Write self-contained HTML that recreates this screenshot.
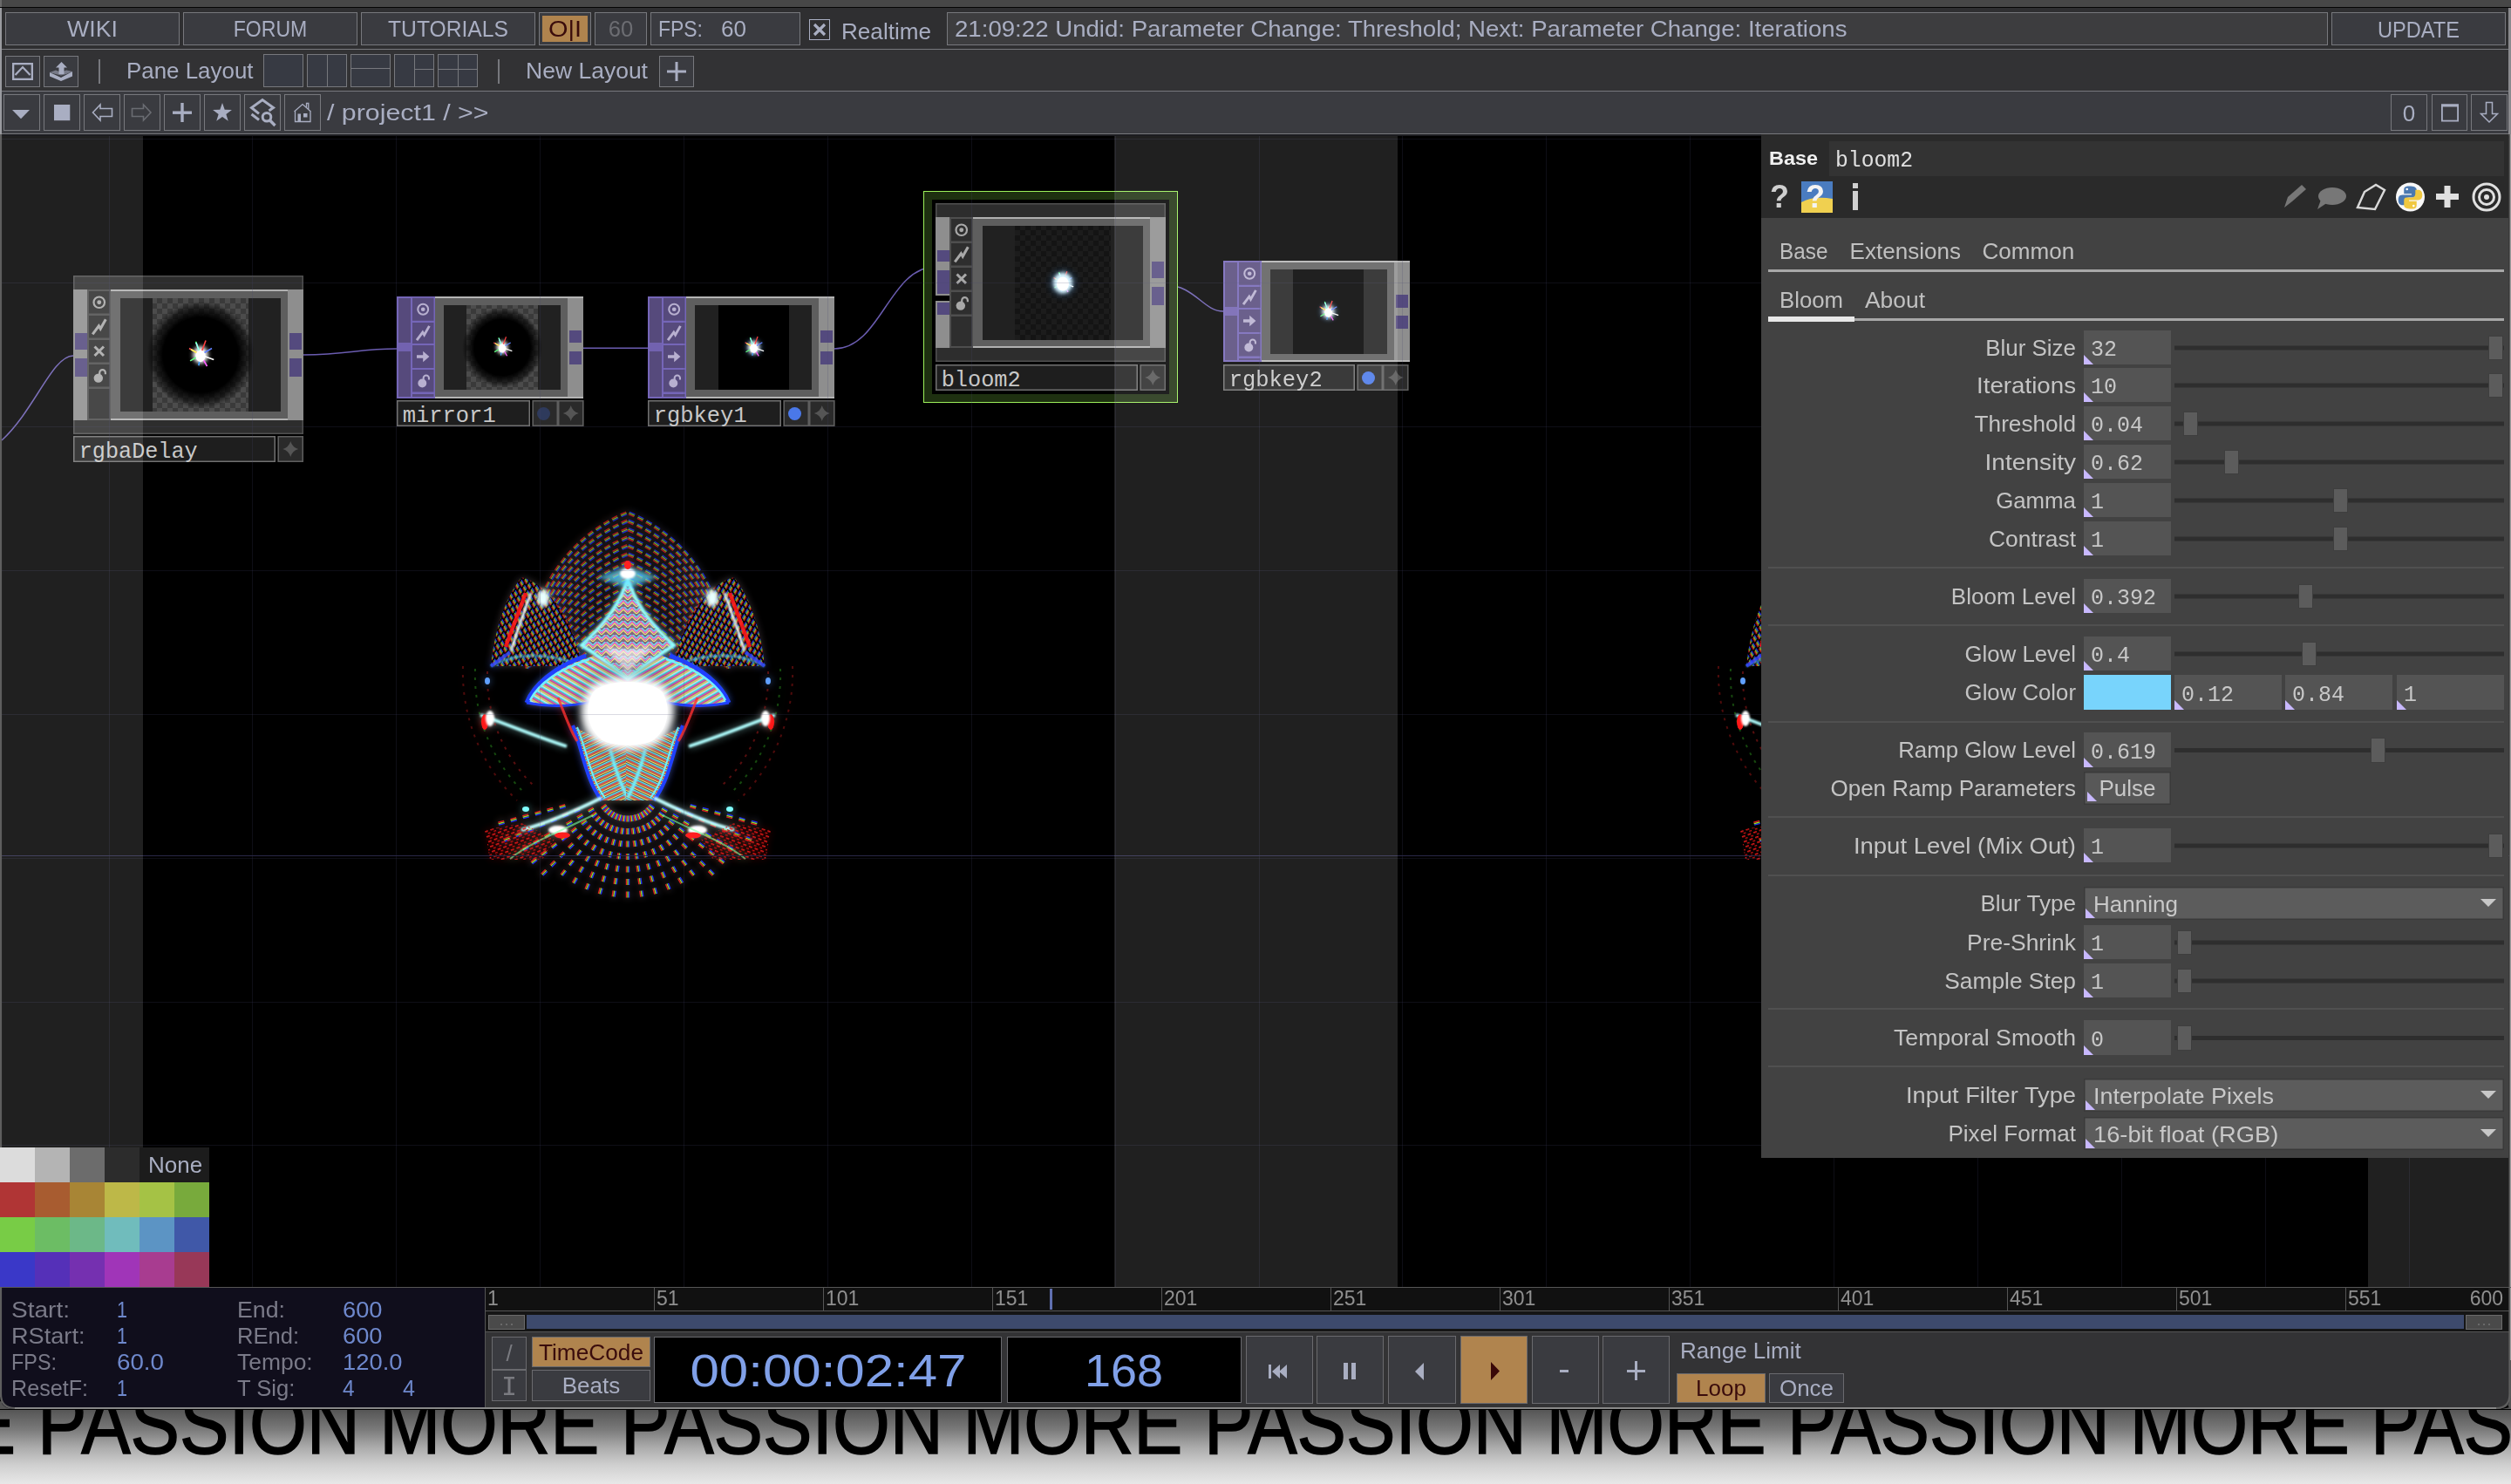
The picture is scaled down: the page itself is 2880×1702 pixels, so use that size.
<!DOCTYPE html>
<html><head><meta charset="utf-8"><style>
*{margin:0;padding:0}
html,body{width:2880px;height:1702px;overflow:hidden;background:#fff}
svg{position:absolute;left:0;top:0;display:block}
</style></head><body>
<svg width="2880" height="1702" viewBox="0 0 2880 1702">
<defs><g id="dsh"><rect x="-3.5" y="-2.2" width="7" height="1.4" fill="#2030ff"/><rect x="-3.5" y="-0.7" width="7" height="1.4" fill="#90e030"/><rect x="-3.5" y="0.8" width="7" height="1.4" fill="#e02020"/></g>
<filter id="b1" x="-50%" y="-50%" width="200%" height="200%"><feGaussianBlur stdDeviation="1"/></filter>
<pattern id="dense" width="7" height="6" patternUnits="userSpaceOnUse" patternTransform="rotate(60)">
<rect width="7" height="6" fill="#000"/><rect x="0" y="0" width="5" height="1.4" fill="#2030ff"/><rect x="1" y="1.5" width="5" height="1.4" fill="#90e030"/><rect x="2" y="3" width="5" height="1.4" fill="#e02020"/></pattern>
<pattern id="reddots" width="7" height="6" patternUnits="userSpaceOnUse" patternTransform="rotate(-20)">
<rect x="0" y="0" width="4" height="1.6" fill="#e01818"/><rect x="3" y="3" width="3" height="1.4" fill="#c01010"/></pattern>
<pattern id="chev" width="10" height="8" patternUnits="userSpaceOnUse">
<rect width="10" height="8" fill="#806880"/><path d="M0 6 L5 1 L10 6" fill="none" stroke="#ff60d0" stroke-width="1.4"/><path d="M0 8 L5 3 L10 8" fill="none" stroke="#f0f070" stroke-width="1.2"/><path d="M0 4 L5 -1 L10 4" fill="none" stroke="#60f0ff" stroke-width="1.2"/></pattern>

<pattern id="chk" width="12" height="12" patternUnits="userSpaceOnUse">
<rect width="12" height="12" fill="#3a3a3a"/><rect width="6" height="6" fill="#4c4c4c"/><rect x="6" y="6" width="6" height="6" fill="#4c4c4c"/></pattern>
<pattern id="chkd" width="12" height="12" patternUnits="userSpaceOnUse">
<rect width="12" height="12" fill="#141414"/><rect width="6" height="6" fill="#1c1c1c"/><rect x="6" y="6" width="6" height="6" fill="#1c1c1c"/></pattern>
<radialGradient id="vig"><stop offset="0" stop-color="#000"/><stop offset="0.7" stop-color="#000"/><stop offset="0.88" stop-color="#000" stop-opacity="0.55"/><stop offset="1" stop-color="#000" stop-opacity="0"/></radialGradient>
<radialGradient id="glow"><stop offset="0" stop-color="#c0e8ff" stop-opacity="0.9"/><stop offset="0.4" stop-color="#4080c0" stop-opacity="0.35"/><stop offset="1" stop-color="#000" stop-opacity="0"/></radialGradient>
<radialGradient id="core"><stop offset="0" stop-color="#fff"/><stop offset="0.7" stop-color="#fff"/><stop offset="1" stop-color="#fff" stop-opacity="0"/></radialGradient>
<filter id="b2" x="-50%" y="-50%" width="200%" height="200%"><feGaussianBlur stdDeviation="2"/></filter>
<filter id="b4" x="-50%" y="-50%" width="200%" height="200%"><feGaussianBlur stdDeviation="4"/></filter>
<filter id="b8" x="-50%" y="-50%" width="200%" height="200%"><feGaussianBlur stdDeviation="8"/></filter>
<clipPath id="clipR"><rect x="1930" y="156" width="90" height="1320"/></clipPath>
<pattern id="dots" width="10" height="10" patternUnits="userSpaceOnUse">
<rect x="1" y="2" width="3" height="1.5" fill="#e03030"/><rect x="6" y="6" width="3" height="1.5" fill="#90e040"/><rect x="4" y="8.5" width="2.5" height="1.2" fill="#4050ff"/></pattern>
<pattern id="dots2" width="8" height="8" patternUnits="userSpaceOnUse">
<rect x="1" y="1" width="3" height="1.6" fill="#ff3030"/><rect x="5" y="4.5" width="3" height="1.6" fill="#a0ff50"/><rect x="2" y="6" width="2.5" height="1.4" fill="#5060ff"/></pattern>
<pattern id="stripes" width="7" height="7" patternUnits="userSpaceOnUse" patternTransform="rotate(30)">
<rect width="7" height="7" fill="#505058"/><rect y="0" width="7" height="1.6" fill="#50f0ff"/><rect y="2.2" width="7" height="1.4" fill="#ff50c0"/><rect y="4.2" width="7" height="1.4" fill="#f0f060"/><rect y="5.8" width="7" height="1" fill="#ffffff"/></pattern>
<pattern id="stripes2" width="6" height="6" patternUnits="userSpaceOnUse" patternTransform="rotate(-25)">
<rect width="6" height="6" fill="#504848"/><rect y="0" width="6" height="1.5" fill="#60e8ff"/><rect y="2" width="6" height="1.3" fill="#ff4040"/><rect y="3.8" width="6" height="1.3" fill="#f8e060"/></pattern>
<g id="fig"><g opacity="0.75"><use href="#dsh" transform="translate(715.4 589.9) rotate(156)"/><use href="#dsh" transform="translate(705.4 594.6) rotate(153)"/><use href="#dsh" transform="translate(695.8 599.9) rotate(149)"/><use href="#dsh" transform="translate(686.5 605.8) rotate(146)"/><use href="#dsh" transform="translate(677.6 612.2) rotate(142)"/><use href="#dsh" transform="translate(669.0 619.2) rotate(139)"/><use href="#dsh" transform="translate(661.0 626.6) rotate(135)"/><use href="#dsh" transform="translate(653.4 634.6) rotate(132)"/><use href="#dsh" transform="translate(646.3 643.0) rotate(128)"/><use href="#dsh" transform="translate(639.7 651.8) rotate(125)"/><use href="#dsh" transform="translate(633.7 661.0) rotate(121)"/><use href="#dsh" transform="translate(628.3 670.6) rotate(118)"/><use href="#dsh" transform="translate(623.4 680.5) rotate(114)"/><use href="#dsh" transform="translate(619.2 690.6) rotate(111)"/><use href="#dsh" transform="translate(615.6 701.0) rotate(107)"/><use href="#dsh" transform="translate(612.7 711.6) rotate(104)"/><use href="#dsh" transform="translate(610.4 722.4) rotate(100)"/><use href="#dsh" transform="translate(608.5 733.2) rotate(100)"/><use href="#dsh" transform="translate(606.6 744.0) rotate(100)"/><use href="#dsh" transform="translate(604.7 754.9) rotate(100)"/><use href="#dsh" transform="translate(724.6 589.9) rotate(24)"/><use href="#dsh" transform="translate(734.6 594.6) rotate(27)"/><use href="#dsh" transform="translate(744.2 599.9) rotate(31)"/><use href="#dsh" transform="translate(753.5 605.8) rotate(34)"/><use href="#dsh" transform="translate(762.4 612.2) rotate(38)"/><use href="#dsh" transform="translate(771.0 619.2) rotate(41)"/><use href="#dsh" transform="translate(779.0 626.6) rotate(45)"/><use href="#dsh" transform="translate(786.6 634.6) rotate(48)"/><use href="#dsh" transform="translate(793.7 643.0) rotate(52)"/><use href="#dsh" transform="translate(800.3 651.8) rotate(55)"/><use href="#dsh" transform="translate(806.3 661.0) rotate(59)"/><use href="#dsh" transform="translate(811.7 670.6) rotate(62)"/><use href="#dsh" transform="translate(816.6 680.5) rotate(66)"/><use href="#dsh" transform="translate(820.8 690.6) rotate(69)"/><use href="#dsh" transform="translate(824.4 701.0) rotate(73)"/><use href="#dsh" transform="translate(827.3 711.6) rotate(76)"/><use href="#dsh" transform="translate(829.6 722.4) rotate(80)"/><use href="#dsh" transform="translate(831.5 733.2) rotate(80)"/><use href="#dsh" transform="translate(833.4 744.0) rotate(80)"/><use href="#dsh" transform="translate(835.3 754.9) rotate(80)"/><use href="#dsh" transform="translate(716.3 599.0) rotate(157)"/><use href="#dsh" transform="translate(706.3 603.7) rotate(153)"/><use href="#dsh" transform="translate(696.7 608.9) rotate(150)"/><use href="#dsh" transform="translate(687.3 614.7) rotate(146)"/><use href="#dsh" transform="translate(678.4 621.1) rotate(143)"/><use href="#dsh" transform="translate(669.8 628.0) rotate(139)"/><use href="#dsh" transform="translate(661.7 635.4) rotate(136)"/><use href="#dsh" transform="translate(654.1 643.3) rotate(132)"/><use href="#dsh" transform="translate(646.9 651.7) rotate(129)"/><use href="#dsh" transform="translate(640.3 660.5) rotate(125)"/><use href="#dsh" transform="translate(634.2 669.7) rotate(122)"/><use href="#dsh" transform="translate(628.8 679.2) rotate(118)"/><use href="#dsh" transform="translate(623.9 689.0) rotate(114)"/><use href="#dsh" transform="translate(619.6 699.2) rotate(111)"/><use href="#dsh" transform="translate(615.9 709.6) rotate(107)"/><use href="#dsh" transform="translate(612.9 720.1) rotate(104)"/><use href="#dsh" transform="translate(610.6 730.9) rotate(100)"/><use href="#dsh" transform="translate(608.7 741.7) rotate(100)"/><use href="#dsh" transform="translate(606.8 752.5) rotate(100)"/><use href="#dsh" transform="translate(604.9 763.4) rotate(100)"/><use href="#dsh" transform="translate(723.7 599.0) rotate(23)"/><use href="#dsh" transform="translate(733.7 603.7) rotate(27)"/><use href="#dsh" transform="translate(743.3 608.9) rotate(30)"/><use href="#dsh" transform="translate(752.7 614.7) rotate(34)"/><use href="#dsh" transform="translate(761.6 621.1) rotate(37)"/><use href="#dsh" transform="translate(770.2 628.0) rotate(41)"/><use href="#dsh" transform="translate(778.3 635.4) rotate(44)"/><use href="#dsh" transform="translate(785.9 643.3) rotate(48)"/><use href="#dsh" transform="translate(793.1 651.7) rotate(51)"/><use href="#dsh" transform="translate(799.7 660.5) rotate(55)"/><use href="#dsh" transform="translate(805.8 669.7) rotate(58)"/><use href="#dsh" transform="translate(811.2 679.2) rotate(62)"/><use href="#dsh" transform="translate(816.1 689.0) rotate(66)"/><use href="#dsh" transform="translate(820.4 699.2) rotate(69)"/><use href="#dsh" transform="translate(824.1 709.6) rotate(73)"/><use href="#dsh" transform="translate(827.1 720.1) rotate(76)"/><use href="#dsh" transform="translate(829.4 730.9) rotate(80)"/><use href="#dsh" transform="translate(831.3 741.7) rotate(80)"/><use href="#dsh" transform="translate(833.2 752.5) rotate(80)"/><use href="#dsh" transform="translate(835.1 763.4) rotate(80)"/><use href="#dsh" transform="translate(716.3 608.5) rotate(157)"/><use href="#dsh" transform="translate(706.3 613.2) rotate(153)"/><use href="#dsh" transform="translate(696.7 618.4) rotate(150)"/><use href="#dsh" transform="translate(687.3 624.2) rotate(146)"/><use href="#dsh" transform="translate(678.4 630.6) rotate(143)"/><use href="#dsh" transform="translate(669.8 637.5) rotate(139)"/><use href="#dsh" transform="translate(661.7 644.9) rotate(136)"/><use href="#dsh" transform="translate(654.1 652.8) rotate(132)"/><use href="#dsh" transform="translate(646.9 661.2) rotate(129)"/><use href="#dsh" transform="translate(640.3 670.0) rotate(125)"/><use href="#dsh" transform="translate(634.2 679.2) rotate(122)"/><use href="#dsh" transform="translate(628.8 688.7) rotate(118)"/><use href="#dsh" transform="translate(623.9 698.5) rotate(114)"/><use href="#dsh" transform="translate(619.6 708.7) rotate(111)"/><use href="#dsh" transform="translate(615.9 719.1) rotate(107)"/><use href="#dsh" transform="translate(612.9 729.6) rotate(104)"/><use href="#dsh" transform="translate(610.6 740.4) rotate(100)"/><use href="#dsh" transform="translate(608.7 751.2) rotate(100)"/><use href="#dsh" transform="translate(606.8 762.0) rotate(100)"/><use href="#dsh" transform="translate(723.7 608.5) rotate(23)"/><use href="#dsh" transform="translate(733.7 613.2) rotate(27)"/><use href="#dsh" transform="translate(743.3 618.4) rotate(30)"/><use href="#dsh" transform="translate(752.7 624.2) rotate(34)"/><use href="#dsh" transform="translate(761.6 630.6) rotate(37)"/><use href="#dsh" transform="translate(770.2 637.5) rotate(41)"/><use href="#dsh" transform="translate(778.3 644.9) rotate(44)"/><use href="#dsh" transform="translate(785.9 652.8) rotate(48)"/><use href="#dsh" transform="translate(793.1 661.2) rotate(51)"/><use href="#dsh" transform="translate(799.7 670.0) rotate(55)"/><use href="#dsh" transform="translate(805.8 679.2) rotate(58)"/><use href="#dsh" transform="translate(811.2 688.7) rotate(62)"/><use href="#dsh" transform="translate(816.1 698.5) rotate(66)"/><use href="#dsh" transform="translate(820.4 708.7) rotate(69)"/><use href="#dsh" transform="translate(824.1 719.1) rotate(73)"/><use href="#dsh" transform="translate(827.1 729.6) rotate(76)"/><use href="#dsh" transform="translate(829.4 740.4) rotate(80)"/><use href="#dsh" transform="translate(831.3 751.2) rotate(80)"/><use href="#dsh" transform="translate(833.2 762.0) rotate(80)"/><use href="#dsh" transform="translate(716.3 618.0) rotate(157)"/><use href="#dsh" transform="translate(706.3 622.7) rotate(153)"/><use href="#dsh" transform="translate(696.7 627.9) rotate(150)"/><use href="#dsh" transform="translate(687.3 633.7) rotate(146)"/><use href="#dsh" transform="translate(678.4 640.1) rotate(143)"/><use href="#dsh" transform="translate(669.8 647.0) rotate(139)"/><use href="#dsh" transform="translate(661.7 654.4) rotate(136)"/><use href="#dsh" transform="translate(654.1 662.3) rotate(132)"/><use href="#dsh" transform="translate(646.9 670.7) rotate(129)"/><use href="#dsh" transform="translate(640.3 679.5) rotate(125)"/><use href="#dsh" transform="translate(634.2 688.7) rotate(122)"/><use href="#dsh" transform="translate(628.8 698.2) rotate(118)"/><use href="#dsh" transform="translate(623.9 708.0) rotate(114)"/><use href="#dsh" transform="translate(619.6 718.2) rotate(111)"/><use href="#dsh" transform="translate(615.9 728.6) rotate(107)"/><use href="#dsh" transform="translate(612.9 739.1) rotate(104)"/><use href="#dsh" transform="translate(610.6 749.9) rotate(100)"/><use href="#dsh" transform="translate(608.7 760.7) rotate(100)"/><use href="#dsh" transform="translate(723.7 618.0) rotate(23)"/><use href="#dsh" transform="translate(733.7 622.7) rotate(27)"/><use href="#dsh" transform="translate(743.3 627.9) rotate(30)"/><use href="#dsh" transform="translate(752.7 633.7) rotate(34)"/><use href="#dsh" transform="translate(761.6 640.1) rotate(37)"/><use href="#dsh" transform="translate(770.2 647.0) rotate(41)"/><use href="#dsh" transform="translate(778.3 654.4) rotate(44)"/><use href="#dsh" transform="translate(785.9 662.3) rotate(48)"/><use href="#dsh" transform="translate(793.1 670.7) rotate(51)"/><use href="#dsh" transform="translate(799.7 679.5) rotate(55)"/><use href="#dsh" transform="translate(805.8 688.7) rotate(58)"/><use href="#dsh" transform="translate(811.2 698.2) rotate(62)"/><use href="#dsh" transform="translate(816.1 708.0) rotate(66)"/><use href="#dsh" transform="translate(820.4 718.2) rotate(69)"/><use href="#dsh" transform="translate(824.1 728.6) rotate(73)"/><use href="#dsh" transform="translate(827.1 739.1) rotate(76)"/><use href="#dsh" transform="translate(829.4 749.9) rotate(80)"/><use href="#dsh" transform="translate(831.3 760.7) rotate(80)"/><use href="#dsh" transform="translate(716.3 627.5) rotate(157)"/><use href="#dsh" transform="translate(706.3 632.2) rotate(153)"/><use href="#dsh" transform="translate(696.7 637.4) rotate(150)"/><use href="#dsh" transform="translate(687.3 643.2) rotate(146)"/><use href="#dsh" transform="translate(678.4 649.6) rotate(143)"/><use href="#dsh" transform="translate(669.8 656.5) rotate(139)"/><use href="#dsh" transform="translate(661.7 663.9) rotate(136)"/><use href="#dsh" transform="translate(654.1 671.8) rotate(132)"/><use href="#dsh" transform="translate(646.9 680.2) rotate(129)"/><use href="#dsh" transform="translate(640.3 689.0) rotate(125)"/><use href="#dsh" transform="translate(634.2 698.2) rotate(122)"/><use href="#dsh" transform="translate(628.8 707.7) rotate(118)"/><use href="#dsh" transform="translate(623.9 717.5) rotate(114)"/><use href="#dsh" transform="translate(619.6 727.7) rotate(111)"/><use href="#dsh" transform="translate(615.9 738.1) rotate(107)"/><use href="#dsh" transform="translate(612.9 748.6) rotate(104)"/><use href="#dsh" transform="translate(610.6 759.4) rotate(100)"/><use href="#dsh" transform="translate(723.7 627.5) rotate(23)"/><use href="#dsh" transform="translate(733.7 632.2) rotate(27)"/><use href="#dsh" transform="translate(743.3 637.4) rotate(30)"/><use href="#dsh" transform="translate(752.7 643.2) rotate(34)"/><use href="#dsh" transform="translate(761.6 649.6) rotate(37)"/><use href="#dsh" transform="translate(770.2 656.5) rotate(41)"/><use href="#dsh" transform="translate(778.3 663.9) rotate(44)"/><use href="#dsh" transform="translate(785.9 671.8) rotate(48)"/><use href="#dsh" transform="translate(793.1 680.2) rotate(51)"/><use href="#dsh" transform="translate(799.7 689.0) rotate(55)"/><use href="#dsh" transform="translate(805.8 698.2) rotate(58)"/><use href="#dsh" transform="translate(811.2 707.7) rotate(62)"/><use href="#dsh" transform="translate(816.1 717.5) rotate(66)"/><use href="#dsh" transform="translate(820.4 727.7) rotate(69)"/><use href="#dsh" transform="translate(824.1 738.1) rotate(73)"/><use href="#dsh" transform="translate(827.1 748.6) rotate(76)"/><use href="#dsh" transform="translate(829.4 759.4) rotate(80)"/><use href="#dsh" transform="translate(716.3 637.0) rotate(157)"/><use href="#dsh" transform="translate(706.3 641.7) rotate(153)"/><use href="#dsh" transform="translate(696.7 646.9) rotate(150)"/><use href="#dsh" transform="translate(687.3 652.7) rotate(146)"/><use href="#dsh" transform="translate(678.4 659.1) rotate(143)"/><use href="#dsh" transform="translate(669.8 666.0) rotate(139)"/><use href="#dsh" transform="translate(661.7 673.4) rotate(136)"/><use href="#dsh" transform="translate(654.1 681.3) rotate(132)"/><use href="#dsh" transform="translate(646.9 689.7) rotate(129)"/><use href="#dsh" transform="translate(640.3 698.5) rotate(125)"/><use href="#dsh" transform="translate(634.2 707.7) rotate(122)"/><use href="#dsh" transform="translate(628.8 717.2) rotate(118)"/><use href="#dsh" transform="translate(623.9 727.0) rotate(114)"/><use href="#dsh" transform="translate(619.6 737.2) rotate(111)"/><use href="#dsh" transform="translate(615.9 747.6) rotate(107)"/><use href="#dsh" transform="translate(612.9 758.1) rotate(104)"/><use href="#dsh" transform="translate(723.7 637.0) rotate(23)"/><use href="#dsh" transform="translate(733.7 641.7) rotate(27)"/><use href="#dsh" transform="translate(743.3 646.9) rotate(30)"/><use href="#dsh" transform="translate(752.7 652.7) rotate(34)"/><use href="#dsh" transform="translate(761.6 659.1) rotate(37)"/><use href="#dsh" transform="translate(770.2 666.0) rotate(41)"/><use href="#dsh" transform="translate(778.3 673.4) rotate(44)"/><use href="#dsh" transform="translate(785.9 681.3) rotate(48)"/><use href="#dsh" transform="translate(793.1 689.7) rotate(51)"/><use href="#dsh" transform="translate(799.7 698.5) rotate(55)"/><use href="#dsh" transform="translate(805.8 707.7) rotate(58)"/><use href="#dsh" transform="translate(811.2 717.2) rotate(62)"/><use href="#dsh" transform="translate(816.1 727.0) rotate(66)"/><use href="#dsh" transform="translate(820.4 737.2) rotate(69)"/><use href="#dsh" transform="translate(824.1 747.6) rotate(73)"/><use href="#dsh" transform="translate(827.1 758.1) rotate(76)"/><use href="#dsh" transform="translate(716.3 646.5) rotate(157)"/><use href="#dsh" transform="translate(706.3 651.2) rotate(153)"/><use href="#dsh" transform="translate(696.7 656.4) rotate(150)"/><use href="#dsh" transform="translate(687.3 662.2) rotate(146)"/><use href="#dsh" transform="translate(678.4 668.6) rotate(143)"/><use href="#dsh" transform="translate(669.8 675.5) rotate(139)"/><use href="#dsh" transform="translate(661.7 682.9) rotate(136)"/><use href="#dsh" transform="translate(654.1 690.8) rotate(132)"/><use href="#dsh" transform="translate(646.9 699.2) rotate(129)"/><use href="#dsh" transform="translate(640.3 708.0) rotate(125)"/><use href="#dsh" transform="translate(634.2 717.2) rotate(122)"/><use href="#dsh" transform="translate(628.8 726.7) rotate(118)"/><use href="#dsh" transform="translate(623.9 736.5) rotate(114)"/><use href="#dsh" transform="translate(619.6 746.7) rotate(111)"/><use href="#dsh" transform="translate(615.9 757.1) rotate(107)"/><use href="#dsh" transform="translate(723.7 646.5) rotate(23)"/><use href="#dsh" transform="translate(733.7 651.2) rotate(27)"/><use href="#dsh" transform="translate(743.3 656.4) rotate(30)"/><use href="#dsh" transform="translate(752.7 662.2) rotate(34)"/><use href="#dsh" transform="translate(761.6 668.6) rotate(37)"/><use href="#dsh" transform="translate(770.2 675.5) rotate(41)"/><use href="#dsh" transform="translate(778.3 682.9) rotate(44)"/><use href="#dsh" transform="translate(785.9 690.8) rotate(48)"/><use href="#dsh" transform="translate(793.1 699.2) rotate(51)"/><use href="#dsh" transform="translate(799.7 708.0) rotate(55)"/><use href="#dsh" transform="translate(805.8 717.2) rotate(58)"/><use href="#dsh" transform="translate(811.2 726.7) rotate(62)"/><use href="#dsh" transform="translate(816.1 736.5) rotate(66)"/><use href="#dsh" transform="translate(820.4 746.7) rotate(69)"/><use href="#dsh" transform="translate(824.1 757.1) rotate(73)"/><use href="#dsh" transform="translate(716.3 656.0) rotate(157)"/><use href="#dsh" transform="translate(706.3 660.7) rotate(153)"/><use href="#dsh" transform="translate(696.7 665.9) rotate(150)"/><use href="#dsh" transform="translate(687.3 671.7) rotate(146)"/><use href="#dsh" transform="translate(678.4 678.1) rotate(143)"/><use href="#dsh" transform="translate(669.8 685.0) rotate(139)"/><use href="#dsh" transform="translate(661.7 692.4) rotate(136)"/><use href="#dsh" transform="translate(654.1 700.3) rotate(132)"/><use href="#dsh" transform="translate(646.9 708.7) rotate(129)"/><use href="#dsh" transform="translate(640.3 717.5) rotate(125)"/><use href="#dsh" transform="translate(634.2 726.7) rotate(122)"/><use href="#dsh" transform="translate(628.8 736.2) rotate(118)"/><use href="#dsh" transform="translate(623.9 746.0) rotate(114)"/><use href="#dsh" transform="translate(619.6 756.2) rotate(111)"/><use href="#dsh" transform="translate(723.7 656.0) rotate(23)"/><use href="#dsh" transform="translate(733.7 660.7) rotate(27)"/><use href="#dsh" transform="translate(743.3 665.9) rotate(30)"/><use href="#dsh" transform="translate(752.7 671.7) rotate(34)"/><use href="#dsh" transform="translate(761.6 678.1) rotate(37)"/><use href="#dsh" transform="translate(770.2 685.0) rotate(41)"/><use href="#dsh" transform="translate(778.3 692.4) rotate(44)"/><use href="#dsh" transform="translate(785.9 700.3) rotate(48)"/><use href="#dsh" transform="translate(793.1 708.7) rotate(51)"/><use href="#dsh" transform="translate(799.7 717.5) rotate(55)"/><use href="#dsh" transform="translate(805.8 726.7) rotate(58)"/><use href="#dsh" transform="translate(811.2 736.2) rotate(62)"/><use href="#dsh" transform="translate(816.1 746.0) rotate(66)"/><use href="#dsh" transform="translate(820.4 756.2) rotate(69)"/><use href="#dsh" transform="translate(716.3 665.5) rotate(157)"/><use href="#dsh" transform="translate(706.3 670.2) rotate(153)"/><use href="#dsh" transform="translate(696.7 675.4) rotate(150)"/><use href="#dsh" transform="translate(687.3 681.2) rotate(146)"/><use href="#dsh" transform="translate(678.4 687.6) rotate(143)"/><use href="#dsh" transform="translate(669.8 694.5) rotate(139)"/><use href="#dsh" transform="translate(661.7 701.9) rotate(136)"/><use href="#dsh" transform="translate(654.1 709.8) rotate(132)"/><use href="#dsh" transform="translate(646.9 718.2) rotate(129)"/><use href="#dsh" transform="translate(640.3 727.0) rotate(125)"/><use href="#dsh" transform="translate(634.2 736.2) rotate(122)"/><use href="#dsh" transform="translate(628.8 745.7) rotate(118)"/><use href="#dsh" transform="translate(623.9 755.5) rotate(114)"/><use href="#dsh" transform="translate(723.7 665.5) rotate(23)"/><use href="#dsh" transform="translate(733.7 670.2) rotate(27)"/><use href="#dsh" transform="translate(743.3 675.4) rotate(30)"/><use href="#dsh" transform="translate(752.7 681.2) rotate(34)"/><use href="#dsh" transform="translate(761.6 687.6) rotate(37)"/><use href="#dsh" transform="translate(770.2 694.5) rotate(41)"/><use href="#dsh" transform="translate(778.3 701.9) rotate(44)"/><use href="#dsh" transform="translate(785.9 709.8) rotate(48)"/><use href="#dsh" transform="translate(793.1 718.2) rotate(51)"/><use href="#dsh" transform="translate(799.7 727.0) rotate(55)"/><use href="#dsh" transform="translate(805.8 736.2) rotate(58)"/><use href="#dsh" transform="translate(811.2 745.7) rotate(62)"/><use href="#dsh" transform="translate(816.1 755.5) rotate(66)"/><use href="#dsh" transform="translate(716.3 675.0) rotate(157)"/><use href="#dsh" transform="translate(706.3 679.7) rotate(153)"/><use href="#dsh" transform="translate(696.7 684.9) rotate(150)"/><use href="#dsh" transform="translate(687.3 690.7) rotate(146)"/><use href="#dsh" transform="translate(678.4 697.1) rotate(143)"/><use href="#dsh" transform="translate(669.8 704.0) rotate(139)"/><use href="#dsh" transform="translate(661.7 711.4) rotate(136)"/><use href="#dsh" transform="translate(654.1 719.3) rotate(132)"/><use href="#dsh" transform="translate(646.9 727.7) rotate(129)"/><use href="#dsh" transform="translate(640.3 736.5) rotate(125)"/><use href="#dsh" transform="translate(634.2 745.7) rotate(122)"/><use href="#dsh" transform="translate(628.8 755.2) rotate(118)"/><use href="#dsh" transform="translate(723.7 675.0) rotate(23)"/><use href="#dsh" transform="translate(733.7 679.7) rotate(27)"/><use href="#dsh" transform="translate(743.3 684.9) rotate(30)"/><use href="#dsh" transform="translate(752.7 690.7) rotate(34)"/><use href="#dsh" transform="translate(761.6 697.1) rotate(37)"/><use href="#dsh" transform="translate(770.2 704.0) rotate(41)"/><use href="#dsh" transform="translate(778.3 711.4) rotate(44)"/><use href="#dsh" transform="translate(785.9 719.3) rotate(48)"/><use href="#dsh" transform="translate(793.1 727.7) rotate(51)"/><use href="#dsh" transform="translate(799.7 736.5) rotate(55)"/><use href="#dsh" transform="translate(805.8 745.7) rotate(58)"/><use href="#dsh" transform="translate(811.2 755.2) rotate(62)"/><use href="#dsh" transform="translate(716.3 684.5) rotate(157)"/><use href="#dsh" transform="translate(706.3 689.2) rotate(153)"/><use href="#dsh" transform="translate(696.7 694.4) rotate(150)"/><use href="#dsh" transform="translate(687.3 700.2) rotate(146)"/><use href="#dsh" transform="translate(678.4 706.6) rotate(143)"/><use href="#dsh" transform="translate(669.8 713.5) rotate(139)"/><use href="#dsh" transform="translate(661.7 720.9) rotate(136)"/><use href="#dsh" transform="translate(654.1 728.8) rotate(132)"/><use href="#dsh" transform="translate(646.9 737.2) rotate(129)"/><use href="#dsh" transform="translate(640.3 746.0) rotate(125)"/><use href="#dsh" transform="translate(634.2 755.2) rotate(122)"/><use href="#dsh" transform="translate(723.7 684.5) rotate(23)"/><use href="#dsh" transform="translate(733.7 689.2) rotate(27)"/><use href="#dsh" transform="translate(743.3 694.4) rotate(30)"/><use href="#dsh" transform="translate(752.7 700.2) rotate(34)"/><use href="#dsh" transform="translate(761.6 706.6) rotate(37)"/><use href="#dsh" transform="translate(770.2 713.5) rotate(41)"/><use href="#dsh" transform="translate(778.3 720.9) rotate(44)"/><use href="#dsh" transform="translate(785.9 728.8) rotate(48)"/><use href="#dsh" transform="translate(793.1 737.2) rotate(51)"/><use href="#dsh" transform="translate(799.7 746.0) rotate(55)"/><use href="#dsh" transform="translate(805.8 755.2) rotate(58)"/><use href="#dsh" transform="translate(716.3 694.0) rotate(157)"/><use href="#dsh" transform="translate(706.3 698.7) rotate(153)"/><use href="#dsh" transform="translate(696.7 703.9) rotate(150)"/><use href="#dsh" transform="translate(687.3 709.7) rotate(146)"/><use href="#dsh" transform="translate(678.4 716.1) rotate(143)"/><use href="#dsh" transform="translate(669.8 723.0) rotate(139)"/><use href="#dsh" transform="translate(661.7 730.4) rotate(136)"/><use href="#dsh" transform="translate(654.1 738.3) rotate(132)"/><use href="#dsh" transform="translate(646.9 746.7) rotate(129)"/><use href="#dsh" transform="translate(640.3 755.5) rotate(125)"/><use href="#dsh" transform="translate(723.7 694.0) rotate(23)"/><use href="#dsh" transform="translate(733.7 698.7) rotate(27)"/><use href="#dsh" transform="translate(743.3 703.9) rotate(30)"/><use href="#dsh" transform="translate(752.7 709.7) rotate(34)"/><use href="#dsh" transform="translate(761.6 716.1) rotate(37)"/><use href="#dsh" transform="translate(770.2 723.0) rotate(41)"/><use href="#dsh" transform="translate(778.3 730.4) rotate(44)"/><use href="#dsh" transform="translate(785.9 738.3) rotate(48)"/><use href="#dsh" transform="translate(793.1 746.7) rotate(51)"/><use href="#dsh" transform="translate(799.7 755.5) rotate(55)"/><use href="#dsh" transform="translate(716.3 703.5) rotate(157)"/><use href="#dsh" transform="translate(706.3 708.2) rotate(153)"/><use href="#dsh" transform="translate(696.7 713.4) rotate(150)"/><use href="#dsh" transform="translate(687.3 719.2) rotate(146)"/><use href="#dsh" transform="translate(678.4 725.6) rotate(143)"/><use href="#dsh" transform="translate(669.8 732.5) rotate(139)"/><use href="#dsh" transform="translate(661.7 739.9) rotate(136)"/><use href="#dsh" transform="translate(654.1 747.8) rotate(132)"/><use href="#dsh" transform="translate(646.9 756.2) rotate(129)"/><use href="#dsh" transform="translate(723.7 703.5) rotate(23)"/><use href="#dsh" transform="translate(733.7 708.2) rotate(27)"/><use href="#dsh" transform="translate(743.3 713.4) rotate(30)"/><use href="#dsh" transform="translate(752.7 719.2) rotate(34)"/><use href="#dsh" transform="translate(761.6 725.6) rotate(37)"/><use href="#dsh" transform="translate(770.2 732.5) rotate(41)"/><use href="#dsh" transform="translate(778.3 739.9) rotate(44)"/><use href="#dsh" transform="translate(785.9 747.8) rotate(48)"/><use href="#dsh" transform="translate(793.1 756.2) rotate(51)"/><use href="#dsh" transform="translate(716.3 713.0) rotate(157)"/><use href="#dsh" transform="translate(706.3 717.7) rotate(153)"/><use href="#dsh" transform="translate(696.7 722.9) rotate(150)"/><use href="#dsh" transform="translate(687.3 728.7) rotate(146)"/><use href="#dsh" transform="translate(678.4 735.1) rotate(143)"/><use href="#dsh" transform="translate(669.8 742.0) rotate(139)"/><use href="#dsh" transform="translate(661.7 749.4) rotate(136)"/><use href="#dsh" transform="translate(654.1 757.3) rotate(132)"/><use href="#dsh" transform="translate(723.7 713.0) rotate(23)"/><use href="#dsh" transform="translate(733.7 717.7) rotate(27)"/><use href="#dsh" transform="translate(743.3 722.9) rotate(30)"/><use href="#dsh" transform="translate(752.7 728.7) rotate(34)"/><use href="#dsh" transform="translate(761.6 735.1) rotate(37)"/><use href="#dsh" transform="translate(770.2 742.0) rotate(41)"/><use href="#dsh" transform="translate(778.3 749.4) rotate(44)"/><use href="#dsh" transform="translate(785.9 757.3) rotate(48)"/><use href="#dsh" transform="translate(716.3 722.5) rotate(157)"/><use href="#dsh" transform="translate(706.3 727.2) rotate(153)"/><use href="#dsh" transform="translate(696.7 732.4) rotate(150)"/><use href="#dsh" transform="translate(687.3 738.2) rotate(146)"/><use href="#dsh" transform="translate(678.4 744.6) rotate(143)"/><use href="#dsh" transform="translate(669.8 751.5) rotate(139)"/><use href="#dsh" transform="translate(661.7 758.9) rotate(136)"/><use href="#dsh" transform="translate(723.7 722.5) rotate(23)"/><use href="#dsh" transform="translate(733.7 727.2) rotate(27)"/><use href="#dsh" transform="translate(743.3 732.4) rotate(30)"/><use href="#dsh" transform="translate(752.7 738.2) rotate(34)"/><use href="#dsh" transform="translate(761.6 744.6) rotate(37)"/><use href="#dsh" transform="translate(770.2 751.5) rotate(41)"/><use href="#dsh" transform="translate(778.3 758.9) rotate(44)"/><use href="#dsh" transform="translate(716.3 732.0) rotate(157)"/><use href="#dsh" transform="translate(706.3 736.7) rotate(153)"/><use href="#dsh" transform="translate(696.7 741.9) rotate(150)"/><use href="#dsh" transform="translate(687.3 747.7) rotate(146)"/><use href="#dsh" transform="translate(678.4 754.1) rotate(143)"/><use href="#dsh" transform="translate(669.8 761.0) rotate(139)"/><use href="#dsh" transform="translate(723.7 732.0) rotate(23)"/><use href="#dsh" transform="translate(733.7 736.7) rotate(27)"/><use href="#dsh" transform="translate(743.3 741.9) rotate(30)"/><use href="#dsh" transform="translate(752.7 747.7) rotate(34)"/><use href="#dsh" transform="translate(761.6 754.1) rotate(37)"/><use href="#dsh" transform="translate(770.2 761.0) rotate(41)"/><use href="#dsh" transform="translate(716.3 741.5) rotate(157)"/><use href="#dsh" transform="translate(706.3 746.2) rotate(153)"/><use href="#dsh" transform="translate(696.7 751.4) rotate(150)"/><use href="#dsh" transform="translate(687.3 757.2) rotate(146)"/><use href="#dsh" transform="translate(678.4 763.6) rotate(143)"/><use href="#dsh" transform="translate(723.7 741.5) rotate(23)"/><use href="#dsh" transform="translate(733.7 746.2) rotate(27)"/><use href="#dsh" transform="translate(743.3 751.4) rotate(30)"/><use href="#dsh" transform="translate(752.7 757.2) rotate(34)"/><use href="#dsh" transform="translate(761.6 763.6) rotate(37)"/><use href="#dsh" transform="translate(716.3 751.0) rotate(157)"/><use href="#dsh" transform="translate(706.3 755.7) rotate(153)"/><use href="#dsh" transform="translate(696.7 760.9) rotate(150)"/><use href="#dsh" transform="translate(723.7 751.0) rotate(23)"/><use href="#dsh" transform="translate(733.7 755.7) rotate(27)"/><use href="#dsh" transform="translate(743.3 760.9) rotate(30)"/><use href="#dsh" transform="translate(716.3 760.5) rotate(157)"/><use href="#dsh" transform="translate(723.7 760.5) rotate(23)"/></g><use href="#dsh" transform="translate(720.0 939.0) rotate(90)"/><use href="#dsh" transform="translate(720.0 953.5) rotate(90)"/><use href="#dsh" transform="translate(720.0 968.0) rotate(90)"/><use href="#dsh" transform="translate(720.0 982.5) rotate(90)"/><use href="#dsh" transform="translate(720.0 997.0) rotate(90)"/><use href="#dsh" transform="translate(720.0 1011.5) rotate(90)"/><use href="#dsh" transform="translate(720.0 1026.0) rotate(90)"/><use href="#dsh" transform="translate(715.6 938.7) rotate(98)"/><use href="#dsh" transform="translate(713.7 953.1) rotate(98)"/><use href="#dsh" transform="translate(711.8 967.5) rotate(98)"/><use href="#dsh" transform="translate(709.9 981.8) rotate(98)"/><use href="#dsh" transform="translate(708.0 996.2) rotate(98)"/><use href="#dsh" transform="translate(706.1 1010.6) rotate(98)"/><use href="#dsh" transform="translate(704.2 1025.0) rotate(98)"/><use href="#dsh" transform="translate(711.2 937.8) rotate(105)"/><use href="#dsh" transform="translate(707.4 951.8) rotate(105)"/><use href="#dsh" transform="translate(703.7 965.9) rotate(105)"/><use href="#dsh" transform="translate(699.9 979.9) rotate(105)"/><use href="#dsh" transform="translate(696.2 993.9) rotate(105)"/><use href="#dsh" transform="translate(692.4 1007.9) rotate(105)"/><use href="#dsh" transform="translate(688.7 1021.9) rotate(105)"/><use href="#dsh" transform="translate(707.0 936.4) rotate(112)"/><use href="#dsh" transform="translate(701.4 949.8) rotate(112)"/><use href="#dsh" transform="translate(695.9 963.2) rotate(112)"/><use href="#dsh" transform="translate(690.3 976.6) rotate(112)"/><use href="#dsh" transform="translate(684.8 990.0) rotate(112)"/><use href="#dsh" transform="translate(679.2 1003.4) rotate(112)"/><use href="#dsh" transform="translate(673.7 1016.8) rotate(112)"/><use href="#dsh" transform="translate(703.0 934.4) rotate(120)"/><use href="#dsh" transform="translate(695.8 947.0) rotate(120)"/><use href="#dsh" transform="translate(688.5 959.6) rotate(120)"/><use href="#dsh" transform="translate(681.2 972.1) rotate(120)"/><use href="#dsh" transform="translate(674.0 984.7) rotate(120)"/><use href="#dsh" transform="translate(666.8 997.2) rotate(120)"/><use href="#dsh" transform="translate(659.5 1009.8) rotate(120)"/><use href="#dsh" transform="translate(699.3 932.0) rotate(128)"/><use href="#dsh" transform="translate(690.5 943.5) rotate(128)"/><use href="#dsh" transform="translate(681.6 955.0) rotate(128)"/><use href="#dsh" transform="translate(672.8 966.5) rotate(128)"/><use href="#dsh" transform="translate(664.0 978.0) rotate(128)"/><use href="#dsh" transform="translate(655.2 989.5) rotate(128)"/><use href="#dsh" transform="translate(646.3 1001.0) rotate(128)"/><use href="#dsh" transform="translate(696.0 929.0) rotate(135)"/><use href="#dsh" transform="translate(685.7 939.3) rotate(135)"/><use href="#dsh" transform="translate(675.5 949.5) rotate(135)"/><use href="#dsh" transform="translate(665.2 959.8) rotate(135)"/><use href="#dsh" transform="translate(654.9 970.1) rotate(135)"/><use href="#dsh" transform="translate(644.7 980.3) rotate(135)"/><use href="#dsh" transform="translate(634.4 990.6) rotate(135)"/><use href="#dsh" transform="translate(624.2 1000.8) rotate(135)"/><use href="#dsh" transform="translate(693.0 925.7) rotate(142)"/><use href="#dsh" transform="translate(681.5 934.5) rotate(142)"/><use href="#dsh" transform="translate(670.0 943.4) rotate(142)"/><use href="#dsh" transform="translate(658.5 952.2) rotate(142)"/><use href="#dsh" transform="translate(647.0 961.0) rotate(142)"/><use href="#dsh" transform="translate(635.5 969.8) rotate(142)"/><use href="#dsh" transform="translate(624.0 978.7) rotate(142)"/><use href="#dsh" transform="translate(612.5 987.5) rotate(142)"/><use href="#dsh" transform="translate(678.0 929.2) rotate(150)"/><use href="#dsh" transform="translate(665.4 936.5) rotate(150)"/><use href="#dsh" transform="translate(652.9 943.8) rotate(150)"/><use href="#dsh" transform="translate(640.3 951.0) rotate(150)"/><use href="#dsh" transform="translate(627.8 958.2) rotate(150)"/><use href="#dsh" transform="translate(615.2 965.5) rotate(150)"/><use href="#dsh" transform="translate(602.7 972.8) rotate(150)"/><use href="#dsh" transform="translate(661.8 929.1) rotate(158)"/><use href="#dsh" transform="translate(648.4 934.7) rotate(158)"/><use href="#dsh" transform="translate(635.0 940.2) rotate(158)"/><use href="#dsh" transform="translate(621.6 945.8) rotate(158)"/><use href="#dsh" transform="translate(608.2 951.3) rotate(158)"/><use href="#dsh" transform="translate(594.8 956.9) rotate(158)"/><use href="#dsh" transform="translate(581.4 962.4) rotate(158)"/><use href="#dsh" transform="translate(645.1 925.1) rotate(165)"/><use href="#dsh" transform="translate(631.1 928.8) rotate(165)"/><use href="#dsh" transform="translate(617.1 932.6) rotate(165)"/><use href="#dsh" transform="translate(603.1 936.3) rotate(165)"/><use href="#dsh" transform="translate(589.1 940.1) rotate(165)"/><use href="#dsh" transform="translate(575.1 943.8) rotate(165)"/><use href="#dsh" transform="translate(724.4 938.7) rotate(82)"/><use href="#dsh" transform="translate(726.3 953.1) rotate(82)"/><use href="#dsh" transform="translate(728.2 967.5) rotate(82)"/><use href="#dsh" transform="translate(730.1 981.8) rotate(82)"/><use href="#dsh" transform="translate(732.0 996.2) rotate(82)"/><use href="#dsh" transform="translate(733.9 1010.6) rotate(82)"/><use href="#dsh" transform="translate(735.8 1025.0) rotate(82)"/><use href="#dsh" transform="translate(728.8 937.8) rotate(75)"/><use href="#dsh" transform="translate(732.6 951.8) rotate(75)"/><use href="#dsh" transform="translate(736.3 965.9) rotate(75)"/><use href="#dsh" transform="translate(740.1 979.9) rotate(75)"/><use href="#dsh" transform="translate(743.8 993.9) rotate(75)"/><use href="#dsh" transform="translate(747.6 1007.9) rotate(75)"/><use href="#dsh" transform="translate(751.3 1021.9) rotate(75)"/><use href="#dsh" transform="translate(733.0 936.4) rotate(68)"/><use href="#dsh" transform="translate(738.6 949.8) rotate(68)"/><use href="#dsh" transform="translate(744.1 963.2) rotate(68)"/><use href="#dsh" transform="translate(749.7 976.6) rotate(68)"/><use href="#dsh" transform="translate(755.2 990.0) rotate(68)"/><use href="#dsh" transform="translate(760.8 1003.4) rotate(68)"/><use href="#dsh" transform="translate(766.3 1016.8) rotate(68)"/><use href="#dsh" transform="translate(737.0 934.4) rotate(60)"/><use href="#dsh" transform="translate(744.2 947.0) rotate(60)"/><use href="#dsh" transform="translate(751.5 959.6) rotate(60)"/><use href="#dsh" transform="translate(758.8 972.1) rotate(60)"/><use href="#dsh" transform="translate(766.0 984.7) rotate(60)"/><use href="#dsh" transform="translate(773.2 997.2) rotate(60)"/><use href="#dsh" transform="translate(780.5 1009.8) rotate(60)"/><use href="#dsh" transform="translate(740.7 932.0) rotate(52)"/><use href="#dsh" transform="translate(749.5 943.5) rotate(52)"/><use href="#dsh" transform="translate(758.4 955.0) rotate(52)"/><use href="#dsh" transform="translate(767.2 966.5) rotate(52)"/><use href="#dsh" transform="translate(776.0 978.0) rotate(52)"/><use href="#dsh" transform="translate(784.8 989.5) rotate(52)"/><use href="#dsh" transform="translate(793.7 1001.0) rotate(52)"/><use href="#dsh" transform="translate(744.0 929.0) rotate(45)"/><use href="#dsh" transform="translate(754.3 939.3) rotate(45)"/><use href="#dsh" transform="translate(764.5 949.5) rotate(45)"/><use href="#dsh" transform="translate(774.8 959.8) rotate(45)"/><use href="#dsh" transform="translate(785.1 970.1) rotate(45)"/><use href="#dsh" transform="translate(795.3 980.3) rotate(45)"/><use href="#dsh" transform="translate(805.6 990.6) rotate(45)"/><use href="#dsh" transform="translate(815.8 1000.8) rotate(45)"/><use href="#dsh" transform="translate(747.0 925.7) rotate(38)"/><use href="#dsh" transform="translate(758.5 934.5) rotate(38)"/><use href="#dsh" transform="translate(770.0 943.4) rotate(38)"/><use href="#dsh" transform="translate(781.5 952.2) rotate(38)"/><use href="#dsh" transform="translate(793.0 961.0) rotate(38)"/><use href="#dsh" transform="translate(804.5 969.8) rotate(38)"/><use href="#dsh" transform="translate(816.0 978.7) rotate(38)"/><use href="#dsh" transform="translate(827.5 987.5) rotate(38)"/><use href="#dsh" transform="translate(762.0 929.2) rotate(30)"/><use href="#dsh" transform="translate(774.6 936.5) rotate(30)"/><use href="#dsh" transform="translate(787.1 943.8) rotate(30)"/><use href="#dsh" transform="translate(799.7 951.0) rotate(30)"/><use href="#dsh" transform="translate(812.2 958.2) rotate(30)"/><use href="#dsh" transform="translate(824.8 965.5) rotate(30)"/><use href="#dsh" transform="translate(837.3 972.8) rotate(30)"/><use href="#dsh" transform="translate(778.2 929.1) rotate(22)"/><use href="#dsh" transform="translate(791.6 934.7) rotate(22)"/><use href="#dsh" transform="translate(805.0 940.2) rotate(22)"/><use href="#dsh" transform="translate(818.4 945.8) rotate(22)"/><use href="#dsh" transform="translate(831.8 951.3) rotate(22)"/><use href="#dsh" transform="translate(845.2 956.9) rotate(22)"/><use href="#dsh" transform="translate(858.6 962.4) rotate(22)"/><use href="#dsh" transform="translate(794.9 925.1) rotate(15)"/><use href="#dsh" transform="translate(808.9 928.8) rotate(15)"/><use href="#dsh" transform="translate(822.9 932.6) rotate(15)"/><use href="#dsh" transform="translate(836.9 936.3) rotate(15)"/><use href="#dsh" transform="translate(850.9 940.1) rotate(15)"/><use href="#dsh" transform="translate(864.9 943.8) rotate(15)"/><path d="M559 770 A175 175 0 0 0 612 901" fill="none" stroke="#c02020" stroke-width="2" stroke-dasharray="3 7" opacity="0.45"/><path d="M545 767 A190 190 0 0 0 602 910" fill="none" stroke="#30a020" stroke-width="2" stroke-dasharray="3 7" opacity="0.45"/><path d="M531 764 A205 205 0 0 0 593 918" fill="none" stroke="#b01818" stroke-width="2" stroke-dasharray="3 7" opacity="0.45"/><path d="M598 662 C 624 668, 648 700, 660 735 L 668 764 L 563 764 C 567 725, 578 688, 598 662 Z" fill="url(#dense)" opacity="0.95"/><path d="M603 680 C 595 702, 587 722, 580 742" fill="none" stroke="#ff1818" stroke-width="4.5" opacity="0.9"/><path d="M609 680 C 601 702, 593 724, 586 747" fill="none" stroke="#f0ffff" stroke-width="3" filter="url(#b1)"/><ellipse cx="623" cy="686" rx="7" ry="10" fill="#e8ffff" filter="url(#b2)"/><path d="M563 764 C 590 748, 630 748, 668 764" fill="none" stroke="#60e0ff" stroke-width="3" opacity="0.6" filter="url(#b1)"/><path d="M563 764 L 585 748" fill="none" stroke="#3040ff" stroke-width="4" opacity="0.8"/><path d="M604 806 C 615 780, 650 755, 712 746 L 722 790 C 690 805, 650 815, 604 806 Z" fill="url(#stripes)"/><path d="M604 806 C 612 786, 635 765, 672 752" fill="none" stroke="#2040ff" stroke-width="5"/><path d="M608 803 C 618 784, 640 768, 676 756" fill="none" stroke="#70f0ff" stroke-width="2.5"/><path d="M604 806 C 650 815, 690 805, 722 790" fill="none" stroke="#2040ff" stroke-width="3"/><path d="M657 832 C 668 860, 672 895, 690 918 L 722 918 L 722 850 C 700 850, 675 845, 657 832 Z" fill="url(#stripes2)"/><path d="M657 832 C 668 860, 672 895, 690 918" fill="none" stroke="#2040ff" stroke-width="4"/><path d="M662 834 C 673 860, 677 893, 694 915" fill="none" stroke="#70f0ff" stroke-width="2"/><path d="M700 860 C 705 880, 712 900, 720 915" fill="none" stroke="#70f0ff" stroke-width="4" filter="url(#b1)"/><path d="M551 820 C 580 830, 610 843, 650 856" fill="none" stroke="#b0ffff" stroke-width="3.5" filter="url(#b1)"/><ellipse cx="556" cy="828" rx="4" ry="9" fill="#ff1818"/><ellipse cx="562" cy="824" rx="5" ry="9" fill="#ffffff" filter="url(#b1)"/><path d="M640 800 C 650 825, 655 840, 662 850" fill="none" stroke="#ff3030" stroke-width="3" opacity="0.8"/><path d="M598 952 C 625 945, 660 930, 690 915" fill="none" stroke="#c0ffff" stroke-width="4" filter="url(#b1)"/><ellipse cx="640" cy="952" rx="11" ry="5" fill="#ffffff" filter="url(#b1)"/><ellipse cx="645" cy="958" rx="9" ry="3.5" fill="#ff2020"/><path d="M556 952 L 598 944 L 636 962 L 622 986 L 562 986 Z" fill="url(#reddots)"/><path d="M585 985 C 610 965, 640 955, 680 935" fill="none" stroke="#80ffa0" stroke-width="2" opacity="0.6"/><ellipse cx="603" cy="928" rx="4" ry="3" fill="#80ffff"/><ellipse cx="559" cy="781" rx="3" ry="4" fill="#60a0ff"/><g transform="matrix(-1 0 0 1 1440 0)"><path d="M559 770 A175 175 0 0 0 612 901" fill="none" stroke="#c02020" stroke-width="2" stroke-dasharray="3 7" opacity="0.45"/><path d="M545 767 A190 190 0 0 0 602 910" fill="none" stroke="#30a020" stroke-width="2" stroke-dasharray="3 7" opacity="0.45"/><path d="M531 764 A205 205 0 0 0 593 918" fill="none" stroke="#b01818" stroke-width="2" stroke-dasharray="3 7" opacity="0.45"/><path d="M598 662 C 624 668, 648 700, 660 735 L 668 764 L 563 764 C 567 725, 578 688, 598 662 Z" fill="url(#dense)" opacity="0.95"/><path d="M603 680 C 595 702, 587 722, 580 742" fill="none" stroke="#ff1818" stroke-width="4.5" opacity="0.9"/><path d="M609 680 C 601 702, 593 724, 586 747" fill="none" stroke="#f0ffff" stroke-width="3" filter="url(#b1)"/><ellipse cx="623" cy="686" rx="7" ry="10" fill="#e8ffff" filter="url(#b2)"/><path d="M563 764 C 590 748, 630 748, 668 764" fill="none" stroke="#60e0ff" stroke-width="3" opacity="0.6" filter="url(#b1)"/><path d="M563 764 L 585 748" fill="none" stroke="#3040ff" stroke-width="4" opacity="0.8"/><path d="M604 806 C 615 780, 650 755, 712 746 L 722 790 C 690 805, 650 815, 604 806 Z" fill="url(#stripes)"/><path d="M604 806 C 612 786, 635 765, 672 752" fill="none" stroke="#2040ff" stroke-width="5"/><path d="M608 803 C 618 784, 640 768, 676 756" fill="none" stroke="#70f0ff" stroke-width="2.5"/><path d="M604 806 C 650 815, 690 805, 722 790" fill="none" stroke="#2040ff" stroke-width="3"/><path d="M657 832 C 668 860, 672 895, 690 918 L 722 918 L 722 850 C 700 850, 675 845, 657 832 Z" fill="url(#stripes2)"/><path d="M657 832 C 668 860, 672 895, 690 918" fill="none" stroke="#2040ff" stroke-width="4"/><path d="M662 834 C 673 860, 677 893, 694 915" fill="none" stroke="#70f0ff" stroke-width="2"/><path d="M700 860 C 705 880, 712 900, 720 915" fill="none" stroke="#70f0ff" stroke-width="4" filter="url(#b1)"/><path d="M551 820 C 580 830, 610 843, 650 856" fill="none" stroke="#b0ffff" stroke-width="3.5" filter="url(#b1)"/><ellipse cx="556" cy="828" rx="4" ry="9" fill="#ff1818"/><ellipse cx="562" cy="824" rx="5" ry="9" fill="#ffffff" filter="url(#b1)"/><path d="M640 800 C 650 825, 655 840, 662 850" fill="none" stroke="#ff3030" stroke-width="3" opacity="0.8"/><path d="M598 952 C 625 945, 660 930, 690 915" fill="none" stroke="#c0ffff" stroke-width="4" filter="url(#b1)"/><ellipse cx="640" cy="952" rx="11" ry="5" fill="#ffffff" filter="url(#b1)"/><ellipse cx="645" cy="958" rx="9" ry="3.5" fill="#ff2020"/><path d="M556 952 L 598 944 L 636 962 L 622 986 L 562 986 Z" fill="url(#reddots)"/><path d="M585 985 C 610 965, 640 955, 680 935" fill="none" stroke="#80ffa0" stroke-width="2" opacity="0.6"/><ellipse cx="603" cy="928" rx="4" ry="3" fill="#80ffff"/><ellipse cx="559" cy="781" rx="3" ry="4" fill="#60a0ff"/></g><path d="M720 664 C 728 690, 745 715, 773 740 C 750 755, 732 768, 720 778 C 708 768, 690 755, 667 740 C 695 715, 712 690, 720 664 Z" fill="url(#chev)"/><path d="M720 664 C 728 690, 745 715, 773 740 C 750 755, 732 768, 720 778 C 708 768, 690 755, 667 740 C 695 715, 712 690, 720 664 Z" fill="none" stroke="#90ffff" stroke-width="4" filter="url(#b1)"/><path d="M690 740 C 705 755, 715 765, 720 776 C 725 765, 735 755, 750 740 C 735 745, 705 745, 690 740 Z" fill="#ffffff" opacity="0.6" filter="url(#b2)"/><path d="M686 662 L 720 650 L 754 662 L 720 674 Z" fill="#60e0ff" opacity="0.6" filter="url(#b2)"/><ellipse cx="720" cy="658" rx="9" ry="6" fill="#ffffff" filter="url(#b1)"/><ellipse cx="720" cy="648" rx="4" ry="5" fill="#ff2020"/><ellipse cx="720" cy="815" rx="70" ry="62" fill="url(#glow)"/><path d="M676 790 C 690 772, 750 772, 764 790 C 780 815, 770 845, 748 856 C 728 862, 712 862, 692 856 C 668 845, 660 815, 676 790 Z" fill="#ffffff" filter="url(#b4)"/><path d="M680 794 C 694 778, 746 778, 760 794 C 772 815, 764 842, 745 851 C 728 856, 712 856, 695 851 C 676 842, 668 815, 680 794 Z" fill="#ffffff"/></g><clipPath id="winclip"><path d="M0 0 L2880 0 L2880 1600 Q2880 1616 2864 1616 L16 1616 Q0 1616 0 1600 Z"/></clipPath></defs>
<linearGradient id="shad" x1="0" y1="0" x2="0" y2="1"><stop offset="0" stop-color="#4a4a4a"/><stop offset="0.40" stop-color="#555555"/><stop offset="0.56" stop-color="#7a7a7a"/><stop offset="0.70" stop-color="#aaaaaa"/><stop offset="0.845" stop-color="#cfcfcf"/><stop offset="1" stop-color="#e8e8e8"/></linearGradient>
<rect x="0" y="1560" width="2880" height="142" fill="url(#shad)" />
<text x="-626" y="1667" font-family="Liberation Sans" font-size="98" fill="#000" textLength="370" lengthAdjust="spacingAndGlyphs" stroke="#000" stroke-width="1.6">PASSION</text>
<text x="-234.00000000000006" y="1667" font-family="Liberation Sans" font-size="98" fill="#000" textLength="252" lengthAdjust="spacingAndGlyphs" stroke="#000" stroke-width="1.6">MORE</text>
<text x="43" y="1667" font-family="Liberation Sans" font-size="98" fill="#000" textLength="370" lengthAdjust="spacingAndGlyphs" stroke="#000" stroke-width="1.6">PASSION</text>
<text x="435.2" y="1667" font-family="Liberation Sans" font-size="98" fill="#000" textLength="252" lengthAdjust="spacingAndGlyphs" stroke="#000" stroke-width="1.6">MORE</text>
<text x="712" y="1667" font-family="Liberation Sans" font-size="98" fill="#000" textLength="370" lengthAdjust="spacingAndGlyphs" stroke="#000" stroke-width="1.6">PASSION</text>
<text x="1104.4" y="1667" font-family="Liberation Sans" font-size="98" fill="#000" textLength="252" lengthAdjust="spacingAndGlyphs" stroke="#000" stroke-width="1.6">MORE</text>
<text x="1381" y="1667" font-family="Liberation Sans" font-size="98" fill="#000" textLength="370" lengthAdjust="spacingAndGlyphs" stroke="#000" stroke-width="1.6">PASSION</text>
<text x="1773.6000000000001" y="1667" font-family="Liberation Sans" font-size="98" fill="#000" textLength="252" lengthAdjust="spacingAndGlyphs" stroke="#000" stroke-width="1.6">MORE</text>
<text x="2050" y="1667" font-family="Liberation Sans" font-size="98" fill="#000" textLength="370" lengthAdjust="spacingAndGlyphs" stroke="#000" stroke-width="1.6">PASSION</text>
<text x="2442.8" y="1667" font-family="Liberation Sans" font-size="98" fill="#000" textLength="252" lengthAdjust="spacingAndGlyphs" stroke="#000" stroke-width="1.6">MORE</text>
<text x="2719" y="1667" font-family="Liberation Sans" font-size="98" fill="#000" textLength="370" lengthAdjust="spacingAndGlyphs" stroke="#000" stroke-width="1.6">PASSION</text>
<text x="3112.0" y="1667" font-family="Liberation Sans" font-size="98" fill="#000" textLength="252" lengthAdjust="spacingAndGlyphs" stroke="#000" stroke-width="1.6">MORE</text>
<rect x="0" y="1616" width="2880" height="1" fill="#000" />
<g clip-path="url(#winclip)">
<rect x="2" y="156" width="2876" height="1320" fill="#000" />
<rect x="2" y="154" width="2876" height="2" fill="#1c1c20" />
<use href="#fig" x="0" y="0" filter="url(#b4)" opacity="0.6"/>
<use href="#fig" x="0" y="0"/>
<g clip-path="url(#clipR)"><use href="#fig" x="1440" y="0"/></g>
<path d="M2 505 C 40 470, 60 408, 84 408" fill="none" stroke="#6a5cb0" stroke-width="1.5" />
<path d="M348 407 C 400 407, 410 400, 455 400" fill="none" stroke="#6a5cb0" stroke-width="1.5" />
<rect x="669" y="398.5" width="74" height="1.5" fill="#6a5cb0" />
<path d="M957 400 C 1010 400, 1020 306, 1073 306" fill="none" stroke="#6a5cb0" stroke-width="1.5" />
<path d="M1337 327 C 1370 327, 1380 357, 1403 357" fill="none" stroke="#6a5cb0" stroke-width="1.5" />
<rect x="84" y="316" width="264" height="182" fill="#2d2d2d" />
<rect x="84.75" y="316.75" width="262.5" height="180.5" fill="none" stroke="#505050" stroke-width="1.5"/>
<rect x="84" y="332" width="264" height="150" fill="#8e8e8e" />
<rect x="100" y="332" width="27" height="150" fill="#4e4e4e" />
<rect x="102" y="334" width="23.5" height="25.5" fill="#2e2e2e" />
<rect x="102" y="362.0" width="23.5" height="25.5" fill="#2e2e2e" />
<rect x="102" y="390.0" width="23.5" height="25.5" fill="#2e2e2e" />
<rect x="102" y="418.0" width="23.5" height="25.5" fill="#2e2e2e" />
<rect x="102" y="446.0" width="23.5" height="34.0" fill="#2e2e2e" />
<circle cx="113.75" cy="346.75" r="6.27" fill="none" stroke="#a8a8a8" stroke-width="2.1849999999999996"/>
<circle cx="113.75" cy="346.75" r="2.4699999999999998" fill="#a8a8a8"/>
<path d="M106.2 383.3 L113.3 373.8 L115.2 377.1 L121.3 366.2" fill="none" stroke="#a8a8a8" stroke-width="3.04" stroke-linejoin="miter" stroke-miterlimit="6"/>
<path d="M108.525 397.525 L118.975 407.975 M118.975 397.525 L108.525 407.975" fill="none" stroke="#a8a8a8" stroke-width="3.04" />
<circle cx="112.8" cy="433.6" r="5.225" fill="#a8a8a8"/>
<path d="M114.225 429.8 L114.225 427.425 A3.3249999999999997 3.3249999999999997 0 0 1 120.875 427.425 L120.875 429.325" fill="none" stroke="#a8a8a8" stroke-width="2.1849999999999996" />
<rect x="127" y="332" width="203" height="150" fill="#5e5e5e" />
<rect x="127" y="332" width="203" height="2" fill="#b0b0b0" />
<rect x="127" y="480" width="203" height="2" fill="#b0b0b0" />
<rect x="138" y="342" width="184" height="130" fill="#212121" />
<rect x="175" y="342" width="110" height="130" fill="url(#chk)"/>
<circle cx="230.0" cy="407.0" r="61.6" fill="url(#vig)"/>
<g transform="translate(230.0 407.0) scale(1.25)">
<ellipse cx="0" cy="0" rx="7" ry="8" fill="#ffffff" filter="url(#b2)"/>
<line x1="0" y1="0" x2="4.8" y2="-13.2" stroke="#ff4040" stroke-width="1.3"/>
<line x1="0" y1="0" x2="-4.4" y2="-12.2" stroke="#40ff60" stroke-width="1.3"/>
<line x1="0" y1="0" x2="10.4" y2="-6.0" stroke="#6080ff" stroke-width="1.3"/>
<line x1="0" y1="0" x2="-10.4" y2="-6.0" stroke="#ff5050" stroke-width="1.3"/>
<line x1="0" y1="0" x2="-9.5" y2="5.5" stroke="#60ff80" stroke-width="1.3"/>
<line x1="0" y1="0" x2="12.2" y2="4.4" stroke="#ffffff" stroke-width="1.3"/>
<line x1="0" y1="0" x2="-1.7" y2="9.8" stroke="#40a0ff" stroke-width="1.3"/>
<line x1="0" y1="0" x2="6.0" y2="10.4" stroke="#ff60ff" stroke-width="1.3"/>
<line x1="0" y1="0" x2="-4.1" y2="-11.3" stroke="#a0ffff" stroke-width="1.3"/>
<line x1="0" y1="0" x2="-8.7" y2="-5.0" stroke="#ffff60" stroke-width="1.3"/>
<ellipse cx="0" cy="1" rx="4.5" ry="5.5" fill="#ffffff"/>
</g>
<rect x="86" y="382" width="14" height="19" fill="#544a7e" />
<rect x="86" y="411" width="14" height="21" fill="#544a7e" />
<rect x="332" y="382" width="14" height="19" fill="#544a7e" />
<rect x="332" y="411" width="14" height="21" fill="#544a7e" />
<rect x="84" y="500" width="232" height="30" fill="#1e1e1e" />
<rect x="84.75" y="500.75" width="230.5" height="28.5" fill="none" stroke="#707070" stroke-width="1.5"/>
<text x="90.7" y="525.2" font-family="Liberation Mono" font-size="25.5" fill="#c8c8c8" textLength="136" lengthAdjust="spacingAndGlyphs" >rgbaDelay</text>
<rect x="318.5" y="500" width="29.5" height="30" fill="#2a2a2a" />
<rect x="319.25" y="500.75" width="28.0" height="28.5" fill="none" stroke="#5e5e5e" stroke-width="1.5"/>
<path d="M333.25 506.0 Q335.23 513.02 342.25 515.0 Q335.23 516.98 333.25 524.0 Q331.27 516.98 324.25 515.0 Q331.27 513.02 333.25 506.0 Z" fill="#555555" />
<rect x="455" y="340" width="214" height="117" fill="#8e8e8e" />
<rect x="455" y="340" width="214" height="2" fill="#b4b4b4" />
<rect x="455" y="455" width="214" height="2" fill="#b4b4b4" />
<rect x="455" y="340" width="44" height="117" fill="#7566b8" />
<rect x="457" y="342" width="14" height="113" fill="#564a7c" />
<rect x="457" y="393" width="14" height="10" fill="#7262b0" />
<rect x="473" y="341.7" width="24.5" height="26.100000000000023" fill="#564a7c" />
<rect x="473" y="370" width="24.5" height="24" fill="#564a7c" />
<rect x="473" y="396" width="24.5" height="26" fill="#564a7c" />
<rect x="473" y="424" width="24.5" height="25.5" fill="#564a7c" />
<rect x="473" y="452" width="24.5" height="3" fill="#564a7c" />
<circle cx="485.2" cy="354.75" r="5.9399999999999995" fill="none" stroke="#b8b0d0" stroke-width="2.07"/>
<circle cx="485.2" cy="354.75" r="2.3400000000000003" fill="#b8b0d0"/>
<path d="M478.0 390.1 L484.8 381.1 L486.6 384.2 L492.4 373.9" fill="none" stroke="#b8b0d0" stroke-width="2.8800000000000003" stroke-linejoin="miter" stroke-miterlimit="6"/>
<path d="M478.0 407.2 L485.2 407.2 L485.2 402.7 L492.4 409.0 L485.2 415.3 L485.2 410.8 L478.0 410.8 Z" fill="#b8b0d0" stroke-linejoin="round"/>
<circle cx="484.3" cy="439.45" r="4.95" fill="#b8b0d0"/>
<path d="M485.65 435.85 L485.65 433.6 A3.15 3.15 0 0 1 491.95 433.6 L491.95 435.4" fill="none" stroke="#b8b0d0" stroke-width="2.07" />
<rect x="499" y="342" width="152" height="113" fill="#5e5e5e" />
<rect x="509" y="350" width="134" height="97" fill="#212121" />
<rect x="535" y="350" width="82" height="97" fill="url(#chk)"/>
<circle cx="576.0" cy="398.5" r="45.9" fill="url(#vig)"/>
<g transform="translate(576.0 398.5) scale(0.9318181818181818)">
<ellipse cx="0" cy="0" rx="7" ry="8" fill="#ffffff" filter="url(#b2)"/>
<line x1="0" y1="0" x2="4.8" y2="-13.2" stroke="#ff4040" stroke-width="1.3"/>
<line x1="0" y1="0" x2="-4.4" y2="-12.2" stroke="#40ff60" stroke-width="1.3"/>
<line x1="0" y1="0" x2="10.4" y2="-6.0" stroke="#6080ff" stroke-width="1.3"/>
<line x1="0" y1="0" x2="-10.4" y2="-6.0" stroke="#ff5050" stroke-width="1.3"/>
<line x1="0" y1="0" x2="-9.5" y2="5.5" stroke="#60ff80" stroke-width="1.3"/>
<line x1="0" y1="0" x2="12.2" y2="4.4" stroke="#ffffff" stroke-width="1.3"/>
<line x1="0" y1="0" x2="-1.7" y2="9.8" stroke="#40a0ff" stroke-width="1.3"/>
<line x1="0" y1="0" x2="6.0" y2="10.4" stroke="#ff60ff" stroke-width="1.3"/>
<line x1="0" y1="0" x2="-4.1" y2="-11.3" stroke="#a0ffff" stroke-width="1.3"/>
<line x1="0" y1="0" x2="-8.7" y2="-5.0" stroke="#ffff60" stroke-width="1.3"/>
<ellipse cx="0" cy="1" rx="4.5" ry="5.5" fill="#ffffff"/>
</g>
<rect x="653" y="379" width="14" height="14" fill="#544a7e" />
<rect x="653" y="403" width="14" height="15" fill="#544a7e" />
<rect x="455" y="459" width="153" height="30" fill="#1e1e1e" />
<rect x="455.75" y="459.75" width="151.5" height="28.5" fill="none" stroke="#707070" stroke-width="1.5"/>
<text x="461.7" y="484.2" font-family="Liberation Mono" font-size="25.5" fill="#c8c8c8" textLength="107" lengthAdjust="spacingAndGlyphs" >mirror1</text>
<rect x="610.5" y="459" width="29.5" height="30" fill="#2a2a2a" />
<rect x="611.25" y="459.75" width="28.0" height="28.5" fill="none" stroke="#5e5e5e" stroke-width="1.5"/>
<circle cx="623.5" cy="474.5" r="7.5" fill="#2e3a5c"/>
<rect x="640.0" y="459" width="29.5" height="30" fill="#2a2a2a" />
<rect x="640.75" y="459.75" width="28.0" height="28.5" fill="none" stroke="#5e5e5e" stroke-width="1.5"/>
<path d="M654.75 465.0 Q656.73 472.02 663.75 474.0 Q656.73 475.98 654.75 483.0 Q652.77 475.98 645.75 474.0 Q652.77 472.02 654.75 465.0 Z" fill="#555555" />
<rect x="743" y="340" width="214" height="117" fill="#8e8e8e" />
<rect x="743" y="340" width="214" height="2" fill="#b4b4b4" />
<rect x="743" y="455" width="214" height="2" fill="#b4b4b4" />
<rect x="743" y="340" width="44" height="117" fill="#7566b8" />
<rect x="745" y="342" width="14" height="113" fill="#564a7c" />
<rect x="745" y="393" width="14" height="10" fill="#7262b0" />
<rect x="761" y="341.7" width="24.5" height="26.100000000000023" fill="#564a7c" />
<rect x="761" y="370" width="24.5" height="24" fill="#564a7c" />
<rect x="761" y="396" width="24.5" height="26" fill="#564a7c" />
<rect x="761" y="424" width="24.5" height="25.5" fill="#564a7c" />
<rect x="761" y="452" width="24.5" height="3" fill="#564a7c" />
<circle cx="773.2" cy="354.75" r="5.9399999999999995" fill="none" stroke="#b8b0d0" stroke-width="2.07"/>
<circle cx="773.2" cy="354.75" r="2.3400000000000003" fill="#b8b0d0"/>
<path d="M766.0 390.1 L772.8 381.1 L774.6 384.2 L780.4 373.9" fill="none" stroke="#b8b0d0" stroke-width="2.8800000000000003" stroke-linejoin="miter" stroke-miterlimit="6"/>
<path d="M766.0 407.2 L773.2 407.2 L773.2 402.7 L780.4 409.0 L773.2 415.3 L773.2 410.8 L766.0 410.8 Z" fill="#b8b0d0" stroke-linejoin="round"/>
<circle cx="772.3000000000001" cy="439.45" r="4.95" fill="#b8b0d0"/>
<path d="M773.6500000000001 435.85 L773.6500000000001 433.6 A3.15 3.15 0 0 1 779.95 433.6 L779.95 435.4" fill="none" stroke="#b8b0d0" stroke-width="2.07" />
<rect x="787" y="342" width="152" height="113" fill="#5e5e5e" />
<rect x="797" y="350" width="134" height="97" fill="#212121" />
<rect x="824" y="350" width="81" height="97" fill="#000" />
<circle cx="864.5" cy="398.5" r="16" fill="url(#glow)"/>
<g transform="translate(864.5 398.5) scale(0.95)">
<ellipse cx="0" cy="0" rx="7" ry="8" fill="#ffffff" filter="url(#b2)"/>
<line x1="0" y1="0" x2="4.8" y2="-13.2" stroke="#ff4040" stroke-width="1.3"/>
<line x1="0" y1="0" x2="-4.4" y2="-12.2" stroke="#40ff60" stroke-width="1.3"/>
<line x1="0" y1="0" x2="10.4" y2="-6.0" stroke="#6080ff" stroke-width="1.3"/>
<line x1="0" y1="0" x2="-10.4" y2="-6.0" stroke="#ff5050" stroke-width="1.3"/>
<line x1="0" y1="0" x2="-9.5" y2="5.5" stroke="#60ff80" stroke-width="1.3"/>
<line x1="0" y1="0" x2="12.2" y2="4.4" stroke="#ffffff" stroke-width="1.3"/>
<line x1="0" y1="0" x2="-1.7" y2="9.8" stroke="#40a0ff" stroke-width="1.3"/>
<line x1="0" y1="0" x2="6.0" y2="10.4" stroke="#ff60ff" stroke-width="1.3"/>
<line x1="0" y1="0" x2="-4.1" y2="-11.3" stroke="#a0ffff" stroke-width="1.3"/>
<line x1="0" y1="0" x2="-8.7" y2="-5.0" stroke="#ffff60" stroke-width="1.3"/>
<ellipse cx="0" cy="1" rx="4.5" ry="5.5" fill="#ffffff"/>
</g>
<rect x="941" y="379" width="14" height="14" fill="#544a7e" />
<rect x="941" y="403" width="14" height="15" fill="#544a7e" />
<rect x="743" y="459" width="153" height="30" fill="#1e1e1e" />
<rect x="743.75" y="459.75" width="151.5" height="28.5" fill="none" stroke="#707070" stroke-width="1.5"/>
<text x="749.7" y="484.2" font-family="Liberation Mono" font-size="25.5" fill="#c8c8c8" textLength="107" lengthAdjust="spacingAndGlyphs" >rgbkey1</text>
<rect x="898.5" y="459" width="29.5" height="30" fill="#2a2a2a" />
<rect x="899.25" y="459.75" width="28.0" height="28.5" fill="none" stroke="#5e5e5e" stroke-width="1.5"/>
<circle cx="911.5" cy="474.5" r="7.5" fill="#4a78e8"/>
<rect x="928.0" y="459" width="29.5" height="30" fill="#2a2a2a" />
<rect x="928.75" y="459.75" width="28.0" height="28.5" fill="none" stroke="#5e5e5e" stroke-width="1.5"/>
<path d="M942.75 465.0 Q944.73 472.02 951.75 474.0 Q944.73 475.98 942.75 483.0 Q940.77 475.98 933.75 474.0 Q940.77 472.02 942.75 465.0 Z" fill="#555555" />
<rect x="1059" y="219" width="292" height="243" fill="#9cf05a" />
<rect x="1060" y="220" width="290" height="241" fill="#1e3010" />
<rect x="1069" y="229" width="272" height="223" fill="#000" />
<rect x="1073" y="233" width="264" height="182" fill="#2d2d2d" />
<rect x="1073.75" y="233.75" width="262.5" height="180.5" fill="none" stroke="#505050" stroke-width="1.5"/>
<rect x="1073" y="249" width="264" height="150" fill="#8e8e8e" />
<rect x="1089" y="249" width="27" height="150" fill="#4e4e4e" />
<rect x="1091" y="251" width="23.5" height="25.5" fill="#2e2e2e" />
<rect x="1091" y="279.0" width="23.5" height="25.5" fill="#2e2e2e" />
<rect x="1091" y="307.0" width="23.5" height="25.5" fill="#2e2e2e" />
<rect x="1091" y="335.0" width="23.5" height="25.5" fill="#2e2e2e" />
<rect x="1091" y="363.0" width="23.5" height="34.0" fill="#2e2e2e" />
<circle cx="1102.75" cy="263.75" r="6.27" fill="none" stroke="#a8a8a8" stroke-width="2.1849999999999996"/>
<circle cx="1102.75" cy="263.75" r="2.4699999999999998" fill="#a8a8a8"/>
<path d="M1095.2 300.3 L1102.3 290.8 L1104.2 294.1 L1110.3 283.2" fill="none" stroke="#a8a8a8" stroke-width="3.04" stroke-linejoin="miter" stroke-miterlimit="6"/>
<path d="M1097.525 314.525 L1107.975 324.975 M1107.975 314.525 L1097.525 324.975" fill="none" stroke="#a8a8a8" stroke-width="3.04" />
<circle cx="1101.8" cy="350.6" r="5.225" fill="#a8a8a8"/>
<path d="M1103.225 346.8 L1103.225 344.425 A3.3249999999999997 3.3249999999999997 0 0 1 1109.875 344.425 L1109.875 346.325" fill="none" stroke="#a8a8a8" stroke-width="2.1849999999999996" />
<rect x="1116" y="249" width="203" height="150" fill="#5e5e5e" />
<rect x="1116" y="249" width="203" height="2" fill="#b0b0b0" />
<rect x="1116" y="397" width="203" height="2" fill="#b0b0b0" />
<rect x="1127" y="259" width="184" height="131" fill="#212121" />
<rect x="1164" y="259" width="110" height="131" fill="url(#chkd)"/>
<circle cx="1219.0" cy="324.5" r="24.2" fill="url(#glow)"/>
<g transform="translate(1219.0 324.5) scale(1.0)">
<ellipse cx="0" cy="0" rx="7" ry="8" fill="#ffffff" filter="url(#b2)"/>
<line x1="0" y1="0" x2="4.8" y2="-13.2" stroke="#ff4040" stroke-width="1.3"/>
<line x1="0" y1="0" x2="-4.4" y2="-12.2" stroke="#40ff60" stroke-width="1.3"/>
<line x1="0" y1="0" x2="10.4" y2="-6.0" stroke="#6080ff" stroke-width="1.3"/>
<line x1="0" y1="0" x2="-10.4" y2="-6.0" stroke="#ff5050" stroke-width="1.3"/>
<line x1="0" y1="0" x2="-9.5" y2="5.5" stroke="#60ff80" stroke-width="1.3"/>
<line x1="0" y1="0" x2="12.2" y2="4.4" stroke="#ffffff" stroke-width="1.3"/>
<line x1="0" y1="0" x2="-1.7" y2="9.8" stroke="#40a0ff" stroke-width="1.3"/>
<line x1="0" y1="0" x2="6.0" y2="10.4" stroke="#ff60ff" stroke-width="1.3"/>
<line x1="0" y1="0" x2="-4.1" y2="-11.3" stroke="#a0ffff" stroke-width="1.3"/>
<line x1="0" y1="0" x2="-8.7" y2="-5.0" stroke="#ffff60" stroke-width="1.3"/>
<ellipse cx="0" cy="1" rx="4.5" ry="5.5" fill="#ffffff"/>
</g>
<ellipse cx="1219.0" cy="324.5" rx="11" ry="12" fill="#d8f4ff" filter="url(#b2)"/>
<ellipse cx="1219.0" cy="325.5" rx="7" ry="8" fill="#ffffff"/>
<rect x="1075" y="287" width="14" height="13" fill="#544a7e" />
<rect x="1075" y="310" width="14" height="27" fill="#544a7e" />
<rect x="1075" y="347" width="14" height="14" fill="#544a7e" />
<rect x="1321" y="300" width="14" height="19" fill="#544a7e" />
<rect x="1321" y="329" width="14" height="21" fill="#544a7e" />
<rect x="1073" y="339" width="16" height="6" fill="#000" />
<rect x="1073" y="418" width="232" height="30" fill="#1e1e1e" />
<rect x="1073.75" y="418.75" width="230.5" height="28.5" fill="none" stroke="#707070" stroke-width="1.5"/>
<text x="1079.7" y="443.2" font-family="Liberation Mono" font-size="25.5" fill="#c8c8c8" textLength="91" lengthAdjust="spacingAndGlyphs" >bloom2</text>
<rect x="1307.5" y="418" width="29.5" height="30" fill="#2a2a2a" />
<rect x="1308.25" y="418.75" width="28.0" height="28.5" fill="none" stroke="#5e5e5e" stroke-width="1.5"/>
<path d="M1322.25 424.0 Q1324.23 431.02 1331.25 433.0 Q1324.23 434.98 1322.25 442.0 Q1320.27 434.98 1313.25 433.0 Q1320.27 431.02 1322.25 424.0 Z" fill="#555555" />
<rect x="1403" y="299" width="214" height="116" fill="#8e8e8e" />
<rect x="1403" y="299" width="214" height="2" fill="#b4b4b4" />
<rect x="1403" y="413" width="214" height="2" fill="#b4b4b4" />
<rect x="1403" y="299" width="44" height="116" fill="#7566b8" />
<rect x="1405" y="301" width="14" height="112" fill="#564a7c" />
<rect x="1405" y="352" width="14" height="10" fill="#7262b0" />
<rect x="1421" y="300.7" width="24.5" height="26.100000000000023" fill="#564a7c" />
<rect x="1421" y="329" width="24.5" height="24" fill="#564a7c" />
<rect x="1421" y="355" width="24.5" height="26" fill="#564a7c" />
<rect x="1421" y="383" width="24.5" height="25.5" fill="#564a7c" />
<rect x="1421" y="411" width="24.5" height="2" fill="#564a7c" />
<circle cx="1433.2" cy="313.75" r="5.9399999999999995" fill="none" stroke="#b8b0d0" stroke-width="2.07"/>
<circle cx="1433.2" cy="313.75" r="2.3400000000000003" fill="#b8b0d0"/>
<path d="M1426.0 349.1 L1432.8 340.1 L1434.5 343.2 L1440.4 332.9" fill="none" stroke="#b8b0d0" stroke-width="2.8800000000000003" stroke-linejoin="miter" stroke-miterlimit="6"/>
<path d="M1426.0 366.2 L1433.2 366.2 L1433.2 361.7 L1440.4 368.0 L1433.2 374.3 L1433.2 369.8 L1426.0 369.8 Z" fill="#b8b0d0" stroke-linejoin="round"/>
<circle cx="1432.3" cy="398.45" r="4.95" fill="#b8b0d0"/>
<path d="M1433.65 394.85 L1433.65 392.6 A3.15 3.15 0 0 1 1439.95 392.6 L1439.95 394.4" fill="none" stroke="#b8b0d0" stroke-width="2.07" />
<rect x="1447" y="301" width="152" height="112" fill="#5e5e5e" />
<rect x="1457" y="309" width="134" height="97" fill="#212121" />
<rect x="1483" y="309" width="81" height="97" fill="#000" />
<circle cx="1523.5" cy="357.5" r="16" fill="url(#glow)"/>
<g transform="translate(1523.5 357.5) scale(0.95)">
<ellipse cx="0" cy="0" rx="7" ry="8" fill="#ffffff" filter="url(#b2)"/>
<line x1="0" y1="0" x2="4.8" y2="-13.2" stroke="#ff4040" stroke-width="1.3"/>
<line x1="0" y1="0" x2="-4.4" y2="-12.2" stroke="#40ff60" stroke-width="1.3"/>
<line x1="0" y1="0" x2="10.4" y2="-6.0" stroke="#6080ff" stroke-width="1.3"/>
<line x1="0" y1="0" x2="-10.4" y2="-6.0" stroke="#ff5050" stroke-width="1.3"/>
<line x1="0" y1="0" x2="-9.5" y2="5.5" stroke="#60ff80" stroke-width="1.3"/>
<line x1="0" y1="0" x2="12.2" y2="4.4" stroke="#ffffff" stroke-width="1.3"/>
<line x1="0" y1="0" x2="-1.7" y2="9.8" stroke="#40a0ff" stroke-width="1.3"/>
<line x1="0" y1="0" x2="6.0" y2="10.4" stroke="#ff60ff" stroke-width="1.3"/>
<line x1="0" y1="0" x2="-4.1" y2="-11.3" stroke="#a0ffff" stroke-width="1.3"/>
<line x1="0" y1="0" x2="-8.7" y2="-5.0" stroke="#ffff60" stroke-width="1.3"/>
<ellipse cx="0" cy="1" rx="4.5" ry="5.5" fill="#ffffff"/>
</g>
<rect x="1601" y="338" width="14" height="15" fill="#544a7e" />
<rect x="1601" y="362" width="14" height="15" fill="#544a7e" />
<rect x="1403" y="418" width="151" height="30" fill="#1e1e1e" />
<rect x="1403.75" y="418.75" width="149.5" height="28.5" fill="none" stroke="#707070" stroke-width="1.5"/>
<text x="1409.7" y="443.2" font-family="Liberation Mono" font-size="25.5" fill="#c8c8c8" textLength="107" lengthAdjust="spacingAndGlyphs" >rgbkey2</text>
<rect x="1556.5" y="418" width="29.5" height="30" fill="#2a2a2a" />
<rect x="1557.25" y="418.75" width="28.0" height="28.5" fill="none" stroke="#5e5e5e" stroke-width="1.5"/>
<circle cx="1569.5" cy="433.5" r="7.5" fill="#4a78e8"/>
<rect x="1586.0" y="418" width="29.5" height="30" fill="#2a2a2a" />
<rect x="1586.75" y="418.75" width="28.0" height="28.5" fill="none" stroke="#5e5e5e" stroke-width="1.5"/>
<path d="M1600.75 424.0 Q1602.73 431.02 1609.75 433.0 Q1602.73 434.98 1600.75 442.0 Q1598.77 434.98 1591.75 433.0 Q1598.77 431.02 1600.75 424.0 Z" fill="#555555" />
<rect x="125" y="156" width="1" height="1320" fill="#46466e" fill-opacity="0.2"/>
<rect x="289" y="156" width="1" height="1320" fill="#46466e" fill-opacity="0.2"/>
<rect x="454" y="156" width="1" height="1320" fill="#46466e" fill-opacity="0.2"/>
<rect x="619" y="156" width="1" height="1320" fill="#46466e" fill-opacity="0.2"/>
<rect x="784" y="156" width="1" height="1320" fill="#46466e" fill-opacity="0.2"/>
<rect x="949" y="156" width="1" height="1320" fill="#46466e" fill-opacity="0.2"/>
<rect x="1114" y="156" width="1" height="1320" fill="#46466e" fill-opacity="0.2"/>
<rect x="1279" y="156" width="1" height="1320" fill="#46466e" fill-opacity="0.2"/>
<rect x="1444" y="156" width="1" height="1320" fill="#46466e" fill-opacity="0.2"/>
<rect x="1608" y="156" width="1" height="1320" fill="#46466e" fill-opacity="0.2"/>
<rect x="1773" y="156" width="1" height="1320" fill="#46466e" fill-opacity="0.2"/>
<rect x="1938" y="156" width="1" height="1320" fill="#46466e" fill-opacity="0.2"/>
<rect x="2103" y="156" width="1" height="1320" fill="#46466e" fill-opacity="0.2"/>
<rect x="2268" y="156" width="1" height="1320" fill="#46466e" fill-opacity="0.2"/>
<rect x="2433" y="156" width="1" height="1320" fill="#46466e" fill-opacity="0.2"/>
<rect x="2598" y="156" width="1" height="1320" fill="#46466e" fill-opacity="0.2"/>
<rect x="2763" y="156" width="1" height="1320" fill="#46466e" fill-opacity="0.2"/>
<rect x="2" y="159" width="2876" height="1" fill="#46466e" fill-opacity="0.2"/>
<rect x="2" y="324" width="2876" height="1" fill="#46466e" fill-opacity="0.2"/>
<rect x="2" y="489" width="2876" height="1" fill="#46466e" fill-opacity="0.2"/>
<rect x="2" y="654" width="2876" height="1" fill="#46466e" fill-opacity="0.2"/>
<rect x="2" y="819" width="2876" height="1" fill="#46466e" fill-opacity="0.2"/>
<rect x="2" y="984" width="2876" height="1" fill="#46466e" fill-opacity="0.2"/>
<rect x="2" y="1149" width="2876" height="1" fill="#46466e" fill-opacity="0.2"/>
<rect x="2" y="1313" width="2876" height="1" fill="#46466e" fill-opacity="0.2"/>
<rect x="2" y="981" width="2876" height="1" fill="#2a2848" />
<rect x="2" y="156" width="162" height="1320" fill="#ffffff" fill-opacity="0.125"/>
<rect x="1278" y="156" width="325" height="1320" fill="#ffffff" fill-opacity="0.125"/>
<rect x="2716" y="156" width="161" height="1320" fill="#ffffff" fill-opacity="0.125"/>
<rect x="2020" y="154" width="857" height="1174" fill="#424242" />
<rect x="2020" y="154" width="857" height="96" fill="#2a2a2a" />
<rect x="2098" y="162" width="774" height="40" fill="#333333" />
<text x="2029" y="189.3" font-family="Liberation Sans" font-size="22" fill="#f0f0f0" font-weight="bold" textLength="56" lengthAdjust="spacingAndGlyphs" >Base</text>
<text x="2105" y="191.3" font-family="Liberation Mono" font-size="25" fill="#e0e0e0" textLength="89" lengthAdjust="spacingAndGlyphs" >bloom2</text>
<text x="2030" y="238" font-family="Liberation Sans" font-size="36" fill="#cfcfcf" font-weight="bold" >?</text>
<rect x="2066" y="208" width="36" height="36" fill="#4a7cc0" />
<path d="M2066 232 Q 2080 224 2102 228 L2102 244 L2066 244 Z" fill="#f0d050" />
<text x="2071" y="238" font-family="Liberation Sans" font-size="36" fill="#f4f4f4" font-weight="bold" >?</text>
<rect x="2125" y="219" width="6" height="22" fill="#d0d0d0" />
<rect x="2125" y="210" width="6" height="6" fill="#d0d0d0" />
<path d="M2620 238 L2624 226 L2640 212 L2645 217 L2629 231 Z" fill="#777" />
<ellipse cx="2675" cy="225" rx="16" ry="10" fill="#777"/>
<path d="M2662 229 L2658 240 L2670 232 Z" fill="#777" />
<path d="M2704 238 L2712 220 L2725 212 L2735 218 L2724 240 Z" fill="none" stroke="#d8d8d8" stroke-width="2.5" />
<circle cx="2764.5" cy="226" r="16.5" fill="#f8f8f8"/>
<g transform="translate(2764.5 226.5) scale(1.45)"><path d="M -1 -9 C -5 -9, -5 -7.5, -5 -5 L -5 -3 L 1 -3 L 1 -2 L -6 -2 C -9 -2, -9.5 0, -9.5 2 C -9.5 5, -8 6, -6 6 L -4 6 L -4 3 C -4 1, -2.5 0, -1 0 L 3 0 C 4.5 0, 5 -1, 5 -2.5 L 5 -6 C 5 -8, 3 -9, -1 -9 Z" fill="#4a78b0"/><path d="M -1 -9 C -5 -9, -5 -7.5, -5 -5 L -5 -3 L 1 -3 L 1 -2 L -6 -2 C -9 -2, -9.5 0, -9.5 2 C -9.5 5, -8 6, -6 6 L -4 6 L -4 3 C -4 1, -2.5 0, -1 0 L 3 0 C 4.5 0, 5 -1, 5 -2.5 L 5 -6 C 5 -8, 3 -9, -1 -9 Z" fill="#f0c840" transform="rotate(180)"/><circle cx="-2.6" cy="-6.6" r="0.9" fill="#fff"/><circle cx="2.6" cy="6.6" r="0.9" fill="#fff"/></g>
<rect x="2794" y="222" width="26" height="7" fill="#e0e0e0" />
<rect x="2803.5" y="213" width="7" height="25" fill="#e0e0e0" />
<circle cx="2852" cy="226" r="15" fill="none" stroke="#e0e0e0" stroke-width="3"/><circle cx="2852" cy="226" r="8.5" fill="none" stroke="#e0e0e0" stroke-width="3"/><circle cx="2852" cy="226" r="3" fill="#e0e0e0"/>
<text x="2041" y="296.5" font-family="Liberation Sans" font-size="26" fill="#c0c0c0" textLength="55.4" lengthAdjust="spacingAndGlyphs" >Base</text>
<text x="2121.6" y="296.5" font-family="Liberation Sans" font-size="26" fill="#c0c0c0" textLength="127.3" lengthAdjust="spacingAndGlyphs" >Extensions</text>
<text x="2273.4" y="296.5" font-family="Liberation Sans" font-size="26" fill="#c0c0c0" textLength="105.8" lengthAdjust="spacingAndGlyphs" >Common</text>
<rect x="2028" y="309" width="844" height="3" fill="#a8a8a8" />
<text x="2041" y="352.5" font-family="Liberation Sans" font-size="26" fill="#c0c0c0" textLength="73" lengthAdjust="spacingAndGlyphs" >Bloom</text>
<text x="2139" y="352.5" font-family="Liberation Sans" font-size="26" fill="#c0c0c0" textLength="69" lengthAdjust="spacingAndGlyphs" >About</text>
<rect x="2028" y="365" width="844" height="3" fill="#a8a8a8" />
<rect x="2028" y="363" width="99" height="6" fill="#e8e8e8" />
<text x="2381" y="407.8" font-family="Liberation Sans" font-size="26" fill="#c4c4c4" text-anchor="end" textLength="103.8" lengthAdjust="spacingAndGlyphs" >Blur Size</text>
<rect x="2390" y="379" width="100" height="39" fill="#545454" />
<text x="2398" y="408" font-family="Liberation Mono" font-size="25" fill="#c8c8c8" >32</text>
<path d="M2390 418 L2390 407 L2401 418 Z" fill="#c8b8ff" />
<rect x="2494" y="396.5" width="378" height="5" fill="#2e2e2e" />
<rect x="2854" y="385" width="17" height="28" fill="#5c5c5c" />
<rect x="2854.5" y="385.5" width="16" height="27" fill="none" stroke="#3e3e3e" stroke-width="1"/>
<text x="2381" y="450.8" font-family="Liberation Sans" font-size="26" fill="#c4c4c4" text-anchor="end" textLength="114" lengthAdjust="spacingAndGlyphs" >Iterations</text>
<rect x="2390" y="422" width="100" height="39" fill="#545454" />
<text x="2398" y="451" font-family="Liberation Mono" font-size="25" fill="#c8c8c8" >10</text>
<path d="M2390 461 L2390 450 L2401 461 Z" fill="#c8b8ff" />
<rect x="2494" y="439.5" width="378" height="5" fill="#2e2e2e" />
<rect x="2854" y="428" width="17" height="28" fill="#5c5c5c" />
<rect x="2854.5" y="428.5" width="16" height="27" fill="none" stroke="#3e3e3e" stroke-width="1"/>
<text x="2381" y="494.8" font-family="Liberation Sans" font-size="26" fill="#c4c4c4" text-anchor="end" textLength="116.4" lengthAdjust="spacingAndGlyphs" >Threshold</text>
<rect x="2390" y="466" width="100" height="39" fill="#545454" />
<text x="2398" y="495" font-family="Liberation Mono" font-size="25" fill="#c8c8c8" >0.04</text>
<path d="M2390 505 L2390 494 L2401 505 Z" fill="#c8b8ff" />
<rect x="2494" y="483.5" width="378" height="5" fill="#2e2e2e" />
<rect x="2504" y="472" width="17" height="28" fill="#5c5c5c" />
<rect x="2504.5" y="472.5" width="16" height="27" fill="none" stroke="#3e3e3e" stroke-width="1"/>
<text x="2381" y="538.8" font-family="Liberation Sans" font-size="26" fill="#c4c4c4" text-anchor="end" textLength="104.5" lengthAdjust="spacingAndGlyphs" >Intensity</text>
<rect x="2390" y="510" width="100" height="39" fill="#545454" />
<text x="2398" y="539" font-family="Liberation Mono" font-size="25" fill="#c8c8c8" >0.62</text>
<path d="M2390 549 L2390 538 L2401 549 Z" fill="#c8b8ff" />
<rect x="2494" y="527.5" width="378" height="5" fill="#2e2e2e" />
<rect x="2551" y="516" width="17" height="28" fill="#5c5c5c" />
<rect x="2551.5" y="516.5" width="16" height="27" fill="none" stroke="#3e3e3e" stroke-width="1"/>
<text x="2381" y="582.8" font-family="Liberation Sans" font-size="26" fill="#c4c4c4" text-anchor="end" textLength="91.8" lengthAdjust="spacingAndGlyphs" >Gamma</text>
<rect x="2390" y="554" width="100" height="39" fill="#545454" />
<text x="2398" y="583" font-family="Liberation Mono" font-size="25" fill="#c8c8c8" >1</text>
<path d="M2390 593 L2390 582 L2401 593 Z" fill="#c8b8ff" />
<rect x="2494" y="571.5" width="378" height="5" fill="#2e2e2e" />
<rect x="2676" y="560" width="17" height="28" fill="#5c5c5c" />
<rect x="2676.5" y="560.5" width="16" height="27" fill="none" stroke="#3e3e3e" stroke-width="1"/>
<text x="2381" y="626.8" font-family="Liberation Sans" font-size="26" fill="#c4c4c4" text-anchor="end" textLength="100" lengthAdjust="spacingAndGlyphs" >Contrast</text>
<rect x="2390" y="598" width="100" height="39" fill="#545454" />
<text x="2398" y="627" font-family="Liberation Mono" font-size="25" fill="#c8c8c8" >1</text>
<path d="M2390 637 L2390 626 L2401 637 Z" fill="#c8b8ff" />
<rect x="2494" y="615.5" width="378" height="5" fill="#2e2e2e" />
<rect x="2676" y="604" width="17" height="28" fill="#5c5c5c" />
<rect x="2676.5" y="604.5" width="16" height="27" fill="none" stroke="#3e3e3e" stroke-width="1"/>
<rect x="2028" y="650" width="844" height="2" fill="#505050" />
<text x="2381" y="692.8" font-family="Liberation Sans" font-size="26" fill="#c4c4c4" text-anchor="end" textLength="143.2" lengthAdjust="spacingAndGlyphs" >Bloom Level</text>
<rect x="2390" y="664" width="100" height="39" fill="#545454" />
<text x="2398" y="693" font-family="Liberation Mono" font-size="25" fill="#c8c8c8" >0.392</text>
<path d="M2390 703 L2390 692 L2401 703 Z" fill="#c8b8ff" />
<rect x="2494" y="681.5" width="378" height="5" fill="#2e2e2e" />
<rect x="2636" y="670" width="17" height="28" fill="#5c5c5c" />
<rect x="2636.5" y="670.5" width="16" height="27" fill="none" stroke="#3e3e3e" stroke-width="1"/>
<rect x="2028" y="716" width="844" height="2" fill="#505050" />
<text x="2381" y="758.8" font-family="Liberation Sans" font-size="26" fill="#c4c4c4" text-anchor="end" textLength="127.4" lengthAdjust="spacingAndGlyphs" >Glow Level</text>
<rect x="2390" y="730" width="100" height="39" fill="#545454" />
<text x="2398" y="759" font-family="Liberation Mono" font-size="25" fill="#c8c8c8" >0.4</text>
<path d="M2390 769 L2390 758 L2401 769 Z" fill="#c8b8ff" />
<rect x="2494" y="747.5" width="378" height="5" fill="#2e2e2e" />
<rect x="2640" y="736" width="17" height="28" fill="#5c5c5c" />
<rect x="2640.5" y="736.5" width="16" height="27" fill="none" stroke="#3e3e3e" stroke-width="1"/>
<text x="2381" y="803.3" font-family="Liberation Sans" font-size="26" fill="#c4c4c4" text-anchor="end" textLength="127.4" lengthAdjust="spacingAndGlyphs" >Glow Color</text>
<rect x="2390" y="774" width="100" height="40" fill="#78d4fc" />
<rect x="2494" y="774" width="123" height="40" fill="#545454" />
<text x="2502" y="804" font-family="Liberation Mono" font-size="25" fill="#c8c8c8" >0.12</text>
<path d="M2494 814 L2494 803 L2505 814 Z" fill="#c8b8ff" />
<rect x="2621" y="774" width="123" height="40" fill="#545454" />
<text x="2629" y="804" font-family="Liberation Mono" font-size="25" fill="#c8c8c8" >0.84</text>
<path d="M2621 814 L2621 803 L2632 814 Z" fill="#c8b8ff" />
<rect x="2749" y="774" width="123" height="40" fill="#545454" />
<text x="2757" y="804" font-family="Liberation Mono" font-size="25" fill="#c8c8c8" >1</text>
<path d="M2749 814 L2749 803 L2760 814 Z" fill="#c8b8ff" />
<rect x="2028" y="827" width="844" height="2" fill="#505050" />
<text x="2381" y="869.3" font-family="Liberation Sans" font-size="26" fill="#c4c4c4" text-anchor="end" textLength="203.8" lengthAdjust="spacingAndGlyphs" >Ramp Glow Level</text>
<rect x="2390" y="840" width="100" height="40" fill="#545454" />
<text x="2398" y="870" font-family="Liberation Mono" font-size="25" fill="#c8c8c8" >0.619</text>
<path d="M2390 880 L2390 869 L2401 880 Z" fill="#c8b8ff" />
<rect x="2494" y="858.0" width="378" height="5" fill="#2e2e2e" />
<rect x="2719" y="846" width="17" height="29" fill="#5c5c5c" />
<rect x="2719.5" y="846.5" width="16" height="28" fill="none" stroke="#3e3e3e" stroke-width="1"/>
<text x="2381" y="913.3" font-family="Liberation Sans" font-size="26" fill="#c4c4c4" text-anchor="end" textLength="281.5" lengthAdjust="spacingAndGlyphs" >Open Ramp Parameters</text>
<rect x="2390" y="885" width="100" height="38" fill="#585858" />
<rect x="2390.75" y="885.75" width="98.5" height="36.5" fill="none" stroke="#3a3a3a" stroke-width="1.5"/>
<text x="2440" y="913" font-family="Liberation Sans" font-size="26" fill="#c8c8c8" text-anchor="middle" >Pulse</text>
<path d="M2394 919 L2394 908 L2405 919 Z" fill="#c8b8ff" />
<rect x="2028" y="936" width="844" height="2" fill="#505050" />
<text x="2381" y="978.8" font-family="Liberation Sans" font-size="26" fill="#c4c4c4" text-anchor="end" textLength="255.1" lengthAdjust="spacingAndGlyphs" >Input Level (Mix Out)</text>
<rect x="2390" y="950" width="100" height="39" fill="#545454" />
<text x="2398" y="979" font-family="Liberation Mono" font-size="25" fill="#c8c8c8" >1</text>
<path d="M2390 989 L2390 978 L2401 989 Z" fill="#c8b8ff" />
<rect x="2494" y="967.5" width="378" height="5" fill="#2e2e2e" />
<rect x="2854" y="956" width="17" height="28" fill="#5c5c5c" />
<rect x="2854.5" y="956.5" width="16" height="27" fill="none" stroke="#3e3e3e" stroke-width="1"/>
<rect x="2028" y="1003" width="844" height="2" fill="#505050" />
<text x="2381" y="1045.3" font-family="Liberation Sans" font-size="26" fill="#c4c4c4" text-anchor="end" textLength="109.6" lengthAdjust="spacingAndGlyphs" >Blur Type</text>
<rect x="2390" y="1017" width="482" height="38" fill="#5c5c5c" />
<rect x="2390.75" y="1017.75" width="480.5" height="36.5" fill="none" stroke="#3a3a3a" stroke-width="1.5"/>
<text x="2401" y="1046" font-family="Liberation Sans" font-size="26" fill="#c8c8c8" textLength="97" lengthAdjust="spacingAndGlyphs" >Hanning</text>
<path d="M2845 1031 L2863 1031 L2854 1040 Z" fill="#c8c8c8" />
<path d="M2392 1053 L2392 1042 L2403 1053 Z" fill="#c8b8ff" />
<text x="2381" y="1089.8" font-family="Liberation Sans" font-size="26" fill="#c4c4c4" text-anchor="end" textLength="125" lengthAdjust="spacingAndGlyphs" >Pre-Shrink</text>
<rect x="2390" y="1061" width="100" height="39" fill="#545454" />
<text x="2398" y="1090" font-family="Liberation Mono" font-size="25" fill="#c8c8c8" >1</text>
<path d="M2390 1100 L2390 1089 L2401 1100 Z" fill="#c8b8ff" />
<rect x="2494" y="1078.5" width="378" height="5" fill="#2e2e2e" />
<rect x="2497" y="1067" width="17" height="28" fill="#5c5c5c" />
<rect x="2497.5" y="1067.5" width="16" height="27" fill="none" stroke="#3e3e3e" stroke-width="1"/>
<text x="2381" y="1133.8" font-family="Liberation Sans" font-size="26" fill="#c4c4c4" text-anchor="end" textLength="150.7" lengthAdjust="spacingAndGlyphs" >Sample Step</text>
<rect x="2390" y="1105" width="100" height="39" fill="#545454" />
<text x="2398" y="1134" font-family="Liberation Mono" font-size="25" fill="#c8c8c8" >1</text>
<path d="M2390 1144 L2390 1133 L2401 1144 Z" fill="#c8b8ff" />
<rect x="2494" y="1122.5" width="378" height="5" fill="#2e2e2e" />
<rect x="2497" y="1111" width="17" height="28" fill="#5c5c5c" />
<rect x="2497.5" y="1111.5" width="16" height="27" fill="none" stroke="#3e3e3e" stroke-width="1"/>
<rect x="2028" y="1156" width="844" height="2" fill="#505050" />
<text x="2381" y="1199.3" font-family="Liberation Sans" font-size="26" fill="#c4c4c4" text-anchor="end" textLength="209" lengthAdjust="spacingAndGlyphs" >Temporal Smooth</text>
<rect x="2390" y="1170" width="100" height="40" fill="#545454" />
<text x="2398" y="1200" font-family="Liberation Mono" font-size="25" fill="#c8c8c8" >0</text>
<path d="M2390 1210 L2390 1199 L2401 1210 Z" fill="#c8b8ff" />
<rect x="2494" y="1188.0" width="378" height="5" fill="#2e2e2e" />
<rect x="2497" y="1176" width="17" height="29" fill="#5c5c5c" />
<rect x="2497.5" y="1176.5" width="16" height="28" fill="none" stroke="#3e3e3e" stroke-width="1"/>
<rect x="2028" y="1222" width="844" height="2" fill="#505050" />
<text x="2381" y="1265.3" font-family="Liberation Sans" font-size="26" fill="#c4c4c4" text-anchor="end" textLength="195" lengthAdjust="spacingAndGlyphs" >Input Filter Type</text>
<rect x="2390" y="1237" width="482" height="38" fill="#5c5c5c" />
<rect x="2390.75" y="1237.75" width="480.5" height="36.5" fill="none" stroke="#3a3a3a" stroke-width="1.5"/>
<text x="2401" y="1266" font-family="Liberation Sans" font-size="26" fill="#c8c8c8" textLength="207" lengthAdjust="spacingAndGlyphs" >Interpolate Pixels</text>
<path d="M2845 1251 L2863 1251 L2854 1260 Z" fill="#c8c8c8" />
<path d="M2392 1273 L2392 1262 L2403 1273 Z" fill="#c8b8ff" />
<text x="2381" y="1309.3" font-family="Liberation Sans" font-size="26" fill="#c4c4c4" text-anchor="end" textLength="146.6" lengthAdjust="spacingAndGlyphs" >Pixel Format</text>
<rect x="2390" y="1281" width="482" height="38" fill="#5c5c5c" />
<rect x="2390.75" y="1281.75" width="480.5" height="36.5" fill="none" stroke="#3a3a3a" stroke-width="1.5"/>
<text x="2401" y="1310" font-family="Liberation Sans" font-size="26" fill="#c8c8c8" textLength="212.3" lengthAdjust="spacingAndGlyphs" >16-bit float (RGB)</text>
<path d="M2845 1295 L2863 1295 L2854 1304 Z" fill="#c8c8c8" />
<path d="M2392 1317 L2392 1306 L2403 1317 Z" fill="#c8b8ff" />
<rect x="2" y="1476" width="554" height="140" fill="#100e1c" />
<rect x="0" y="1476" width="2880" height="1" fill="#555555" />
<text x="13" y="1510.7" font-family="Liberation Sans" font-size="25" fill="#7a7a88" textLength="67" lengthAdjust="spacingAndGlyphs" >Start:</text>
<text x="134" y="1510.7" font-family="Liberation Sans" font-size="25" fill="#6e88cc" textLength="12" lengthAdjust="spacingAndGlyphs" >1</text>
<text x="13" y="1541" font-family="Liberation Sans" font-size="25" fill="#7a7a88" textLength="84.5" lengthAdjust="spacingAndGlyphs" >RStart:</text>
<text x="134" y="1541" font-family="Liberation Sans" font-size="25" fill="#6e88cc" textLength="12" lengthAdjust="spacingAndGlyphs" >1</text>
<text x="13" y="1571" font-family="Liberation Sans" font-size="25" fill="#7a7a88" textLength="52" lengthAdjust="spacingAndGlyphs" >FPS:</text>
<text x="134" y="1571" font-family="Liberation Sans" font-size="25" fill="#6e88cc" textLength="54" lengthAdjust="spacingAndGlyphs" >60.0</text>
<text x="13" y="1601.2" font-family="Liberation Sans" font-size="25" fill="#7a7a88" textLength="88" lengthAdjust="spacingAndGlyphs" >ResetF:</text>
<text x="134" y="1601.2" font-family="Liberation Sans" font-size="25" fill="#6e88cc" textLength="12" lengthAdjust="spacingAndGlyphs" >1</text>
<text x="272" y="1510.7" font-family="Liberation Sans" font-size="25" fill="#7a7a88" textLength="55" lengthAdjust="spacingAndGlyphs" >End:</text>
<text x="393" y="1510.7" font-family="Liberation Sans" font-size="25" fill="#6e88cc" textLength="45.5" lengthAdjust="spacingAndGlyphs" >600</text>
<text x="272" y="1541" font-family="Liberation Sans" font-size="25" fill="#7a7a88" textLength="71" lengthAdjust="spacingAndGlyphs" >REnd:</text>
<text x="393" y="1541" font-family="Liberation Sans" font-size="25" fill="#6e88cc" textLength="45.5" lengthAdjust="spacingAndGlyphs" >600</text>
<text x="272" y="1571" font-family="Liberation Sans" font-size="25" fill="#7a7a88" textLength="86.7" lengthAdjust="spacingAndGlyphs" >Tempo:</text>
<text x="393" y="1571" font-family="Liberation Sans" font-size="25" fill="#6e88cc" textLength="68.5" lengthAdjust="spacingAndGlyphs" >120.0</text>
<text x="272" y="1601.2" font-family="Liberation Sans" font-size="25" fill="#7a7a88" textLength="66.4" lengthAdjust="spacingAndGlyphs" >T Sig:</text>
<text x="393" y="1601.2" font-family="Liberation Sans" font-size="25" fill="#6e88cc" textLength="13.6" lengthAdjust="spacingAndGlyphs" >4</text>
<text x="462" y="1601.2" font-family="Liberation Sans" font-size="25" fill="#6e88cc" textLength="14" lengthAdjust="spacingAndGlyphs" >4</text>
<rect x="556" y="1476" width="2322" height="28" fill="#111111" />
<rect x="556" y="1476" width="2322" height="1" fill="#555555" />
<rect x="556" y="1503" width="2322" height="1" fill="#555555" />
<rect x="556" y="1476" width="1" height="140" fill="#555555" />
<text x="559" y="1497" font-family="Liberation Sans" font-size="23" fill="#909090" >1</text>
<rect x="750" y="1477" width="1" height="27" fill="#555555" />
<text x="753" y="1497" font-family="Liberation Sans" font-size="23" fill="#909090" >51</text>
<rect x="944" y="1477" width="1" height="27" fill="#555555" />
<text x="947" y="1497" font-family="Liberation Sans" font-size="23" fill="#909090" >101</text>
<rect x="1138" y="1477" width="1" height="27" fill="#555555" />
<text x="1141" y="1497" font-family="Liberation Sans" font-size="23" fill="#909090" >151</text>
<rect x="1332" y="1477" width="1" height="27" fill="#555555" />
<text x="1335" y="1497" font-family="Liberation Sans" font-size="23" fill="#909090" >201</text>
<rect x="1526" y="1477" width="1" height="27" fill="#555555" />
<text x="1529" y="1497" font-family="Liberation Sans" font-size="23" fill="#909090" >251</text>
<rect x="1720" y="1477" width="1" height="27" fill="#555555" />
<text x="1723" y="1497" font-family="Liberation Sans" font-size="23" fill="#909090" >301</text>
<rect x="1914" y="1477" width="1" height="27" fill="#555555" />
<text x="1917" y="1497" font-family="Liberation Sans" font-size="23" fill="#909090" >351</text>
<rect x="2108" y="1477" width="1" height="27" fill="#555555" />
<text x="2111" y="1497" font-family="Liberation Sans" font-size="23" fill="#909090" >401</text>
<rect x="2302" y="1477" width="1" height="27" fill="#555555" />
<text x="2305" y="1497" font-family="Liberation Sans" font-size="23" fill="#909090" >451</text>
<rect x="2496" y="1477" width="1" height="27" fill="#555555" />
<text x="2499" y="1497" font-family="Liberation Sans" font-size="23" fill="#909090" >501</text>
<rect x="2690" y="1477" width="1" height="27" fill="#555555" />
<text x="2693" y="1497" font-family="Liberation Sans" font-size="23" fill="#909090" >551</text>
<text x="2871" y="1497" font-family="Liberation Sans" font-size="23" fill="#909090" text-anchor="end" >600</text>
<rect x="1204" y="1478" width="3" height="24" fill="#6070b0" />
<rect x="557" y="1504" width="2321" height="23" fill="#151515" />
<rect x="560" y="1508" width="42" height="17" fill="#4a4a4a" />
<rect x="560.5" y="1508.5" width="41" height="16" fill="none" stroke="#6a6a6a" stroke-width="1"/>
<rect x="604" y="1508" width="2222" height="16" fill="#3d4a6c" />
<rect x="2828" y="1508" width="42" height="17" fill="#4a4a4a" />
<rect x="2828.5" y="1508.5" width="41" height="16" fill="none" stroke="#6a6a6a" stroke-width="1"/>
<rect x="574" y="1518" width="2" height="2" fill="#6a6a6a" />
<rect x="2842" y="1518" width="2" height="2" fill="#6a6a6a" />
<rect x="580" y="1518" width="2" height="2" fill="#6a6a6a" />
<rect x="2848" y="1518" width="2" height="2" fill="#6a6a6a" />
<rect x="586" y="1518" width="2" height="2" fill="#6a6a6a" />
<rect x="2854" y="1518" width="2" height="2" fill="#6a6a6a" />
<rect x="556" y="1527" width="2322" height="1" fill="#555555" />
<rect x="557" y="1528" width="2321" height="88" fill="#333335" />
<rect x="564" y="1533" width="40" height="38" fill="#3a3b40" />
<rect x="564.5" y="1533.5" width="39" height="37" fill="none" stroke="#6a6a6e" stroke-width="1"/>
<text x="584" y="1561" font-family="Liberation Sans" font-size="26" fill="#7a7b80" text-anchor="middle" >/</text>
<rect x="564" y="1571" width="40" height="36" fill="#3a3b40" />
<rect x="564.5" y="1571.5" width="39" height="35" fill="none" stroke="#6a6a6e" stroke-width="1"/>
<rect x="582.5" y="1579" width="3" height="21" fill="#7a7b80" />
<rect x="578" y="1579" width="12" height="2.5" fill="#7a7b80" />
<rect x="578" y="1597.5" width="12" height="2.5" fill="#7a7b80" />
<rect x="610" y="1533" width="136" height="35" fill="#b0844e" />
<rect x="610.5" y="1533.5" width="135" height="34" fill="none" stroke="#6a6a6e" stroke-width="1"/>
<text x="678" y="1560" font-family="Liberation Sans" font-size="26" fill="#3a0c0c" text-anchor="middle" textLength="120" lengthAdjust="spacingAndGlyphs" >TimeCode</text>
<rect x="610" y="1571" width="136" height="36" fill="#3a3b40" />
<rect x="610.5" y="1571.5" width="135" height="35" fill="none" stroke="#6a6a6e" stroke-width="1"/>
<text x="678" y="1598" font-family="Liberation Sans" font-size="26" fill="#a9aec2" text-anchor="middle" >Beats</text>
<rect x="750" y="1533" width="399" height="76" fill="#000000" />
<rect x="750.5" y="1533.5" width="398" height="75" fill="none" stroke="#6a6a6e" stroke-width="1"/>
<text x="950" y="1590" font-family="Liberation Sans" font-size="52" fill="#80a0e8" text-anchor="middle" textLength="317" lengthAdjust="spacingAndGlyphs" >00:00:02:47</text>
<rect x="1155" y="1533" width="269" height="76" fill="#000000" />
<rect x="1155.5" y="1533.5" width="268" height="75" fill="none" stroke="#6a6a6e" stroke-width="1"/>
<text x="1289" y="1590" font-family="Liberation Sans" font-size="52" fill="#80a0e8" text-anchor="middle" textLength="90" lengthAdjust="spacingAndGlyphs" >168</text>
<rect x="1429" y="1532" width="77" height="78" fill="#3a3b40" />
<rect x="1429.5" y="1532.5" width="76" height="77" fill="none" stroke="#6a6a6e" stroke-width="1"/>
<rect x="1510" y="1532" width="77" height="78" fill="#3a3b40" />
<rect x="1510.5" y="1532.5" width="76" height="77" fill="none" stroke="#6a6a6e" stroke-width="1"/>
<rect x="1592" y="1532" width="78" height="78" fill="#3a3b40" />
<rect x="1592.5" y="1532.5" width="77" height="77" fill="none" stroke="#6a6a6e" stroke-width="1"/>
<rect x="1675" y="1532" width="77" height="78" fill="#3a3b40" />
<rect x="1675.5" y="1532.5" width="76" height="77" fill="none" stroke="#6a6a6e" stroke-width="1"/>
<rect x="1757" y="1532" width="77" height="78" fill="#3a3b40" />
<rect x="1757.5" y="1532.5" width="76" height="77" fill="none" stroke="#6a6a6e" stroke-width="1"/>
<rect x="1838" y="1532" width="77" height="78" fill="#3a3b40" />
<rect x="1838.5" y="1532.5" width="76" height="77" fill="none" stroke="#6a6a6e" stroke-width="1"/>
<rect x="1455" y="1565" width="3" height="16" fill="#a9aec2" />
<path d="M1459 1573 L1468 1565 L1468 1581 Z" fill="#a9aec2" />
<path d="M1467 1573 L1476 1565 L1476 1581 Z" fill="#a9aec2" />
<rect x="1541" y="1563" width="5" height="19" fill="#a9aec2" />
<rect x="1550" y="1563" width="5" height="19" fill="#a9aec2" />
<path d="M1623 1573 L1633 1563 L1633 1583 Z" fill="#a9aec2" />
<rect x="1675" y="1532" width="77" height="78" fill="#b0844e" />
<rect x="1675.5" y="1532.5" width="76" height="77" fill="none" stroke="#6a6a6e" stroke-width="1"/>
<path d="M1710 1562 L1720 1572.5 L1710 1583 Z" fill="#3a0808" />
<rect x="1789" y="1571" width="10" height="3" fill="#a9aec2" />
<rect x="1866" y="1571" width="21" height="3" fill="#a9aec2" />
<rect x="1875" y="1561" width="3" height="22" fill="#a9aec2" />
<text x="1927" y="1558" font-family="Liberation Sans" font-size="26" fill="#a9aec2" >Range Limit</text>
<rect x="1923" y="1575" width="102" height="34" fill="#b0844e" />
<rect x="1923.5" y="1575.5" width="101" height="33" fill="none" stroke="#6a6a6e" stroke-width="1"/>
<text x="1974" y="1601" font-family="Liberation Sans" font-size="26" fill="#3a0c0c" text-anchor="middle" >Loop</text>
<rect x="2029" y="1575" width="86" height="34" fill="#3a3b40" />
<rect x="2029.5" y="1575.5" width="85" height="33" fill="none" stroke="#6a6a6e" stroke-width="1"/>
<text x="2072" y="1601" font-family="Liberation Sans" font-size="26" fill="#a9aec2" text-anchor="middle" >Once</text>
<rect x="0" y="0" width="2880" height="8" fill="#474747" />
<rect x="0" y="8" width="2880" height="1" fill="#050505" />
<rect x="0" y="9" width="2880" height="47" fill="#2f2f31" />
<rect x="0" y="57" width="2880" height="47" fill="#323234" />
<rect x="0" y="105" width="2880" height="48" fill="#3a3b40" />
<rect x="0" y="56" width="2880" height="1" fill="#77787d" />
<rect x="0" y="104" width="2880" height="1" fill="#77787d" />
<rect x="0" y="153" width="2880" height="1" fill="#77787d" />
<rect x="0" y="0" width="2" height="8" fill="#6a6a6a" />
<rect x="6" y="14" width="200" height="38" fill="#3a3b40" />
<rect x="6.5" y="14.5" width="199" height="37" fill="none" stroke="#77787d" stroke-width="1"/>
<text x="106" y="42" font-family="Liberation Sans" font-size="26" fill="#a9aec2" text-anchor="middle" textLength="58" lengthAdjust="spacingAndGlyphs" >WIKI</text>
<rect x="210" y="14" width="200" height="38" fill="#3a3b40" />
<rect x="210.5" y="14.5" width="199" height="37" fill="none" stroke="#77787d" stroke-width="1"/>
<text x="310" y="42" font-family="Liberation Sans" font-size="26" fill="#a9aec2" text-anchor="middle" textLength="84.5" lengthAdjust="spacingAndGlyphs" >FORUM</text>
<rect x="414" y="14" width="200" height="38" fill="#3a3b40" />
<rect x="414.5" y="14.5" width="199" height="37" fill="none" stroke="#77787d" stroke-width="1"/>
<text x="514" y="42" font-family="Liberation Sans" font-size="26" fill="#a9aec2" text-anchor="middle" textLength="138" lengthAdjust="spacingAndGlyphs" >TUTORIALS</text>
<rect x="618" y="14" width="60" height="38" fill="#3a3b40" />
<rect x="618.5" y="14.5" width="59" height="37" fill="none" stroke="#77787d" stroke-width="1"/>
<rect x="622" y="18" width="52" height="30" fill="#b0844e" />
<text x="648" y="42" font-family="Liberation Sans" font-size="26" fill="#3a0c0c" text-anchor="middle" textLength="38" lengthAdjust="spacingAndGlyphs" >O|I</text>
<rect x="682" y="14" width="60" height="38" fill="#3a3b40" />
<rect x="682.5" y="14.5" width="59" height="37" fill="none" stroke="#77787d" stroke-width="1"/>
<text x="712" y="42" font-family="Liberation Sans" font-size="26" fill="#6c6d72" text-anchor="middle" textLength="28.5" lengthAdjust="spacingAndGlyphs" >60</text>
<rect x="746" y="14" width="172" height="38" fill="#3a3b40" />
<rect x="746.5" y="14.5" width="171" height="37" fill="none" stroke="#77787d" stroke-width="1"/>
<text x="755" y="42" font-family="Liberation Sans" font-size="26" fill="#a9aec2" textLength="51" lengthAdjust="spacingAndGlyphs" >FPS:</text>
<text x="827" y="42" font-family="Liberation Sans" font-size="26" fill="#a9aec2" textLength="29" lengthAdjust="spacingAndGlyphs" >60</text>
<rect x="928" y="22" width="24" height="24" fill="#2f2f31" />
<rect x="928.5" y="22.5" width="23" height="23" fill="none" stroke="#a9aec2" stroke-width="1"/>
<path d="M934 28 L946 40 M946 28 L934 40" fill="none" stroke="#a9aec2" stroke-width="3.2" />
<text x="965" y="45" font-family="Liberation Sans" font-size="26" fill="#a9aec2" textLength="103" lengthAdjust="spacingAndGlyphs" >Realtime</text>
<rect x="1086" y="14" width="1584" height="38" fill="#3d3d3f" />
<rect x="1086.5" y="14.5" width="1583" height="37" fill="none" stroke="#77787d" stroke-width="1"/>
<text x="1095" y="42" font-family="Liberation Sans" font-size="26" fill="#a9aec2" textLength="1023.5" lengthAdjust="spacingAndGlyphs" >21:09:22 Undid: Parameter Change: Threshold; Next: Parameter Change: Iterations</text>
<rect x="2674" y="14" width="200" height="38" fill="#3a3b40" />
<rect x="2674.5" y="14.5" width="199" height="37" fill="none" stroke="#77787d" stroke-width="1"/>
<text x="2774" y="43" font-family="Liberation Sans" font-size="26" fill="#a9aec2" text-anchor="middle" textLength="94" lengthAdjust="spacingAndGlyphs" >UPDATE</text>
<rect x="6" y="64" width="40" height="36" fill="#3a3b40" />
<rect x="6.5" y="64.5" width="39" height="35" fill="none" stroke="#77787d" stroke-width="1"/>
<rect x="14" y="72" width="24" height="20" fill="none" />
<rect x="15.15" y="73.15" width="21.7" height="17.7" fill="none" stroke="#a9aec2" stroke-width="2.3"/>
<path d="M17.5 86 L26 77 L34.5 86" fill="none" stroke="#a9aec2" stroke-width="2.2" />
<rect x="50" y="64" width="40" height="36" fill="#3a3b40" />
<rect x="50.5" y="64.5" width="39" height="35" fill="none" stroke="#77787d" stroke-width="1"/>
<path d="M57 83 L70 89 L83 82 L83 87.5 L70 93 L57 87.5 Z" fill="#a9aec2" />
<path d="M57 83 L64 80.5 L70 83 L76 80.5 L83 82 L76 85 L70 86.5 L64 85 Z" fill="#a9aec2" opacity="0.55"/>
<path d="M70.5 71 L77 77.5 L73.5 77.5 L73.5 85 L67.5 85 L67.5 77.5 L64 77.5 Z" fill="#a9aec2" />
<rect x="113" y="68" width="2" height="28" fill="#77787d" />
<text x="145" y="90" font-family="Liberation Sans" font-size="26" fill="#a9aec2" textLength="145.5" lengthAdjust="spacingAndGlyphs" >Pane Layout</text>
<rect x="302" y="62" width="46" height="38" fill="#373a43" />
<rect x="302.5" y="62.5" width="45" height="37" fill="none" stroke="#77787d" stroke-width="1"/>
<rect x="352" y="62" width="46" height="38" fill="#373a43" />
<rect x="352.5" y="62.5" width="45" height="37" fill="none" stroke="#77787d" stroke-width="1"/>
<rect x="402" y="62" width="46" height="38" fill="#373a43" />
<rect x="402.5" y="62.5" width="45" height="37" fill="none" stroke="#77787d" stroke-width="1"/>
<rect x="452" y="62" width="46" height="38" fill="#373a43" />
<rect x="452.5" y="62.5" width="45" height="37" fill="none" stroke="#77787d" stroke-width="1"/>
<rect x="502" y="62" width="46" height="38" fill="#373a43" />
<rect x="502.5" y="62.5" width="45" height="37" fill="none" stroke="#77787d" stroke-width="1"/>
<rect x="375" y="62" width="1" height="38" fill="#77787d" />
<rect x="402" y="78" width="46" height="1" fill="#77787d" />
<rect x="475" y="62" width="1" height="38" fill="#77787d" />
<rect x="475" y="79" width="23" height="1" fill="#77787d" />
<rect x="525" y="62" width="1" height="38" fill="#77787d" />
<rect x="502" y="79" width="46" height="1" fill="#77787d" />
<rect x="571" y="68" width="2" height="28" fill="#77787d" />
<text x="603" y="90" font-family="Liberation Sans" font-size="26" fill="#a9aec2" textLength="140" lengthAdjust="spacingAndGlyphs" >New Layout</text>
<rect x="756" y="64" width="40" height="36" fill="#3a3b40" />
<rect x="756.5" y="64.5" width="39" height="35" fill="none" stroke="#77787d" stroke-width="1"/>
<rect x="765" y="80.5" width="22" height="3" fill="#a9aec2" />
<rect x="774.5" y="71" width="3" height="22" fill="#a9aec2" />
<rect x="4" y="108" width="42" height="42" fill="#3a3b40" />
<rect x="4.5" y="108.5" width="41" height="41" fill="none" stroke="#77787d" stroke-width="1"/>
<rect x="50" y="108" width="42" height="42" fill="#3a3b40" />
<rect x="50.5" y="108.5" width="41" height="41" fill="none" stroke="#77787d" stroke-width="1"/>
<rect x="96" y="108" width="42" height="42" fill="#3a3b40" />
<rect x="96.5" y="108.5" width="41" height="41" fill="none" stroke="#77787d" stroke-width="1"/>
<rect x="142" y="108" width="42" height="42" fill="#3a3b40" />
<rect x="142.5" y="108.5" width="41" height="41" fill="none" stroke="#77787d" stroke-width="1"/>
<rect x="188" y="108" width="42" height="42" fill="#3a3b40" />
<rect x="188.5" y="108.5" width="41" height="41" fill="none" stroke="#77787d" stroke-width="1"/>
<rect x="234" y="108" width="42" height="42" fill="#3a3b40" />
<rect x="234.5" y="108.5" width="41" height="41" fill="none" stroke="#77787d" stroke-width="1"/>
<rect x="280" y="108" width="42" height="42" fill="#3a3b40" />
<rect x="280.5" y="108.5" width="41" height="41" fill="none" stroke="#77787d" stroke-width="1"/>
<rect x="326" y="108" width="42" height="42" fill="#3a3b40" />
<rect x="326.5" y="108.5" width="41" height="41" fill="none" stroke="#77787d" stroke-width="1"/>
<path d="M14 126 L34 126 L24 136.3 Z" fill="#a9aec2" />
<rect x="62" y="120" width="18.3" height="18.2" fill="#a9aec2" />
<path d="M106.5 129 L115 120 L115 124.5 L128.5 124.5 L128.5 133.5 L115 133.5 L115 138 Z" fill="none" stroke="#a9aec2" stroke-width="1.6" />
<path d="M173 129 L164.5 120 L164.5 124.5 L151.5 124.5 L151.5 133.5 L164.5 133.5 L164.5 138 Z" fill="none" stroke="#6a6c72" stroke-width="1.6" />
<rect x="198" y="127.5" width="22" height="3.4" fill="#a9aec2" />
<rect x="207.3" y="118" width="3.4" height="22" fill="#a9aec2" />
<path d="M255.00 118.00 L257.70 125.78 L265.94 125.95 L259.37 130.92 L261.76 138.80 L255.00 134.10 L248.24 138.80 L250.63 130.92 L244.06 125.95 L252.30 125.78 Z" fill="#a9aec2" />
<path d="M297 130.3 L288.5 123.5 L301 114.5 L313.5 123.5 L308.5 127" fill="none" stroke="#a9aec2" stroke-width="3" />
<path d="M288.5 131 L297 137.5" fill="none" stroke="#a9aec2" stroke-width="3" />
<circle cx="306" cy="134.3" r="4.8" fill="none" stroke="#a9aec2" stroke-width="3"/>
<path d="M309.8 138.3 L315.5 144" fill="none" stroke="#a9aec2" stroke-width="3.4" />
<path d="M337.5 128 L347 119.5 L356.5 128 M338.5 127 L338.5 139.5 L356 139.5 L356 127 M351.5 123.5 L351.5 118.5 L353.8 118.5 L353.8 125.5" fill="none" stroke="#a9aec2" stroke-width="1.3" />
<rect x="341.5" y="130.5" width="3.5" height="9" fill="#a9aec2" />
<rect x="348" y="130" width="4.5" height="4.5" fill="#a9aec2" />
<text x="375" y="138.3" font-family="Liberation Sans" font-size="26" fill="#a9aec2" textLength="185.5" lengthAdjust="spacingAndGlyphs" >/ project1 / &gt;&gt;</text>
<rect x="2742" y="108" width="42" height="42" fill="#3a3b40" />
<rect x="2742.5" y="108.5" width="41" height="41" fill="none" stroke="#77787d" stroke-width="1"/>
<text x="2763" y="138.5" font-family="Liberation Sans" font-size="26" fill="#a9aec2" text-anchor="middle" >0</text>
<rect x="2789" y="108" width="41" height="42" fill="#3a3b40" />
<rect x="2789.5" y="108.5" width="40" height="41" fill="none" stroke="#77787d" stroke-width="1"/>
<rect x="2800" y="119.5" width="20" height="20.0" fill="none" />
<rect x="2800.9" y="120.4" width="18.2" height="18.2" fill="none" stroke="#a9aec2" stroke-width="1.8"/>
<rect x="2800" y="119.5" width="20" height="3" fill="#a9aec2" />
<rect x="2834" y="108" width="42" height="42" fill="#3a3b40" />
<rect x="2834.5" y="108.5" width="41" height="41" fill="none" stroke="#77787d" stroke-width="1"/>
<path d="M2851.5 117.5 L2858.5 117.5 L2858.5 130.5 L2864.5 130.5 L2855 140 L2845.5 130.5 L2851.5 130.5 Z" fill="none" stroke="#a9aec2" stroke-width="1.5" />
</g>
<path d="M1 154 L1 1599 Q1 1615 17 1615 L2863 1615 Q2878.5 1615 2878.5 1599 L2878.5 154" fill="none" stroke="#5e5e5e" stroke-width="2.2"/>
<rect x="17" y="1614" width="2846" height="2" fill="#888888" />
<rect x="0" y="9" width="2" height="145" fill="#9a9ba0" />
<rect x="2877" y="9" width="3" height="145" fill="#8a8a8e" />
<rect x="0" y="1316" width="40" height="40" fill="#dcdcdc" />
<rect x="40" y="1316" width="40" height="40" fill="#b4b4b4" />
<rect x="80" y="1316" width="40" height="40" fill="#6c6c6c" />
<rect x="120" y="1316" width="40" height="40" fill="#2c2c2c" />
<rect x="0" y="1356" width="40" height="40" fill="#b03535" />
<rect x="40" y="1356" width="40" height="40" fill="#a85c30" />
<rect x="80" y="1356" width="40" height="40" fill="#a88535" />
<rect x="120" y="1356" width="40" height="40" fill="#bdb848" />
<rect x="160" y="1356" width="40" height="40" fill="#a5c245" />
<rect x="200" y="1356" width="40" height="40" fill="#78aa3c" />
<rect x="0" y="1396" width="40" height="40" fill="#78cc46" />
<rect x="40" y="1396" width="40" height="40" fill="#6cbd64" />
<rect x="80" y="1396" width="40" height="40" fill="#6cb888" />
<rect x="120" y="1396" width="40" height="40" fill="#70bcbc" />
<rect x="160" y="1396" width="40" height="40" fill="#5c94c4" />
<rect x="200" y="1396" width="40" height="40" fill="#4058a8" />
<rect x="0" y="1436" width="40" height="40" fill="#3a38c8" />
<rect x="40" y="1436" width="40" height="40" fill="#5530b8" />
<rect x="80" y="1436" width="40" height="40" fill="#7530b0" />
<rect x="120" y="1436" width="40" height="40" fill="#a035b8" />
<rect x="160" y="1436" width="40" height="40" fill="#a83c90" />
<rect x="200" y="1436" width="40" height="40" fill="#983858" />
<rect x="160" y="1316" width="80" height="40" fill="#1c1c1c" />
<text x="170" y="1345" font-family="Liberation Sans" font-size="26" fill="#a9aec2" >None</text>
</svg>
</body></html>
